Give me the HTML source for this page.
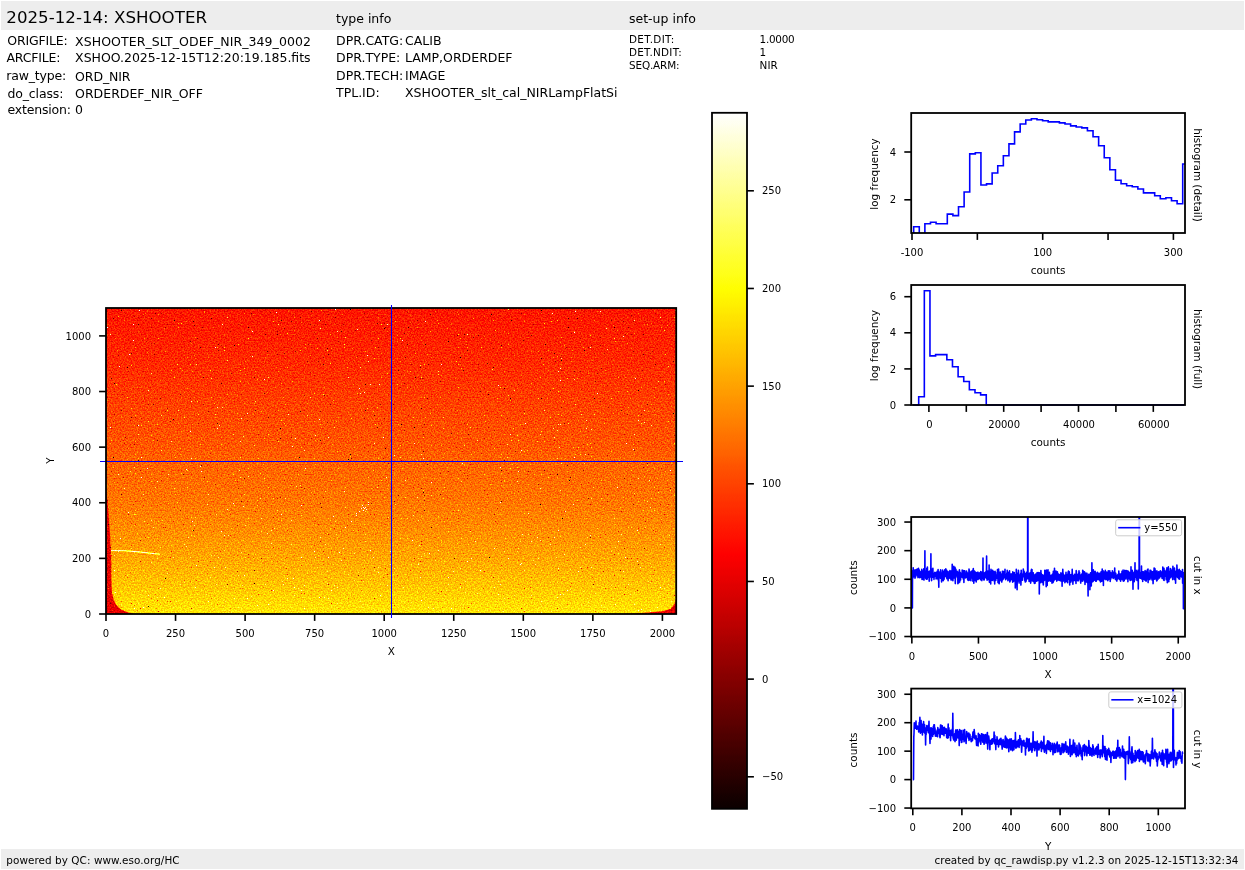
<!DOCTYPE html>
<html><head><meta charset="utf-8"><title>XSHOOTER rawdisp</title>
<style>
html,body{margin:0;padding:0;background:#fff;overflow:hidden;}
svg{display:block;will-change:transform;transform:translateZ(0);font-family:"DejaVu Sans","Liberation Sans",sans-serif;fill:#000;}
</style></head><body>
<svg width="1245" height="870" viewBox="0 0 1245 870">
<defs>
<filter id="hotn" x="0" y="0" width="1" height="1" filterUnits="objectBoundingBox" color-interpolation-filters="sRGB">
<feTurbulence type="fractalNoise" baseFrequency="0.7" numOctaves="2" seed="7" result="t"/>
<feColorMatrix in="t" type="matrix" values="1 0 0 0 0  1 0 0 0 0  1 0 0 0 0  0 0 0 0 1" result="m"/>
<feComponentTransfer in="m" result="n"><feFuncR type="table" tableValues="0.0000 0.0000 0.0000 0.0000 0.0000 0.0000 0.0000 0.0000 0.0000 0.0000 0.0000 0.0099 0.0446 0.0793 0.1141 0.1488 0.1835 0.2182 0.2530 0.2877 0.3224 0.3572 0.3919 0.4109 0.4142 0.4175 0.4208 0.4241 0.4274 0.4307 0.4340 0.4373 0.4406 0.4439 0.4472 0.4505 0.4538 0.4571 0.4604 0.4637 0.4670 0.4703 0.4736 0.4769 0.4802 0.4835 0.4868 0.4901 0.4934 0.4967 0.5000 0.5033 0.5066 0.5099 0.5132 0.5165 0.5198 0.5231 0.5264 0.5297 0.5330 0.5363 0.5396 0.5429 0.5462 0.5495 0.5528 0.5561 0.5594 0.5627 0.5660 0.5693 0.5726 0.5759 0.5792 0.5825 0.5858 0.6054 0.6412 0.6770 0.7128 0.7486 0.7843 0.8201 0.8559 0.8917 0.9275 0.9633 0.9991 1.0000 1.0000 1.0000 1.0000 1.0000 1.0000 1.0000 1.0000 1.0000 1.0000 1.0000 1.0000"/><feFuncG type="table" tableValues="0.0000 0.0000 0.0000 0.0000 0.0000 0.0000 0.0000 0.0000 0.0000 0.0000 0.0000 0.0099 0.0446 0.0793 0.1141 0.1488 0.1835 0.2182 0.2530 0.2877 0.3224 0.3572 0.3919 0.4109 0.4142 0.4175 0.4208 0.4241 0.4274 0.4307 0.4340 0.4373 0.4406 0.4439 0.4472 0.4505 0.4538 0.4571 0.4604 0.4637 0.4670 0.4703 0.4736 0.4769 0.4802 0.4835 0.4868 0.4901 0.4934 0.4967 0.5000 0.5033 0.5066 0.5099 0.5132 0.5165 0.5198 0.5231 0.5264 0.5297 0.5330 0.5363 0.5396 0.5429 0.5462 0.5495 0.5528 0.5561 0.5594 0.5627 0.5660 0.5693 0.5726 0.5759 0.5792 0.5825 0.5858 0.6054 0.6412 0.6770 0.7128 0.7486 0.7843 0.8201 0.8559 0.8917 0.9275 0.9633 0.9991 1.0000 1.0000 1.0000 1.0000 1.0000 1.0000 1.0000 1.0000 1.0000 1.0000 1.0000 1.0000"/><feFuncB type="table" tableValues="0.0000 0.0000 0.0000 0.0000 0.0000 0.0000 0.0000 0.0000 0.0000 0.0000 0.0000 0.0099 0.0446 0.0793 0.1141 0.1488 0.1835 0.2182 0.2530 0.2877 0.3224 0.3572 0.3919 0.4109 0.4142 0.4175 0.4208 0.4241 0.4274 0.4307 0.4340 0.4373 0.4406 0.4439 0.4472 0.4505 0.4538 0.4571 0.4604 0.4637 0.4670 0.4703 0.4736 0.4769 0.4802 0.4835 0.4868 0.4901 0.4934 0.4967 0.5000 0.5033 0.5066 0.5099 0.5132 0.5165 0.5198 0.5231 0.5264 0.5297 0.5330 0.5363 0.5396 0.5429 0.5462 0.5495 0.5528 0.5561 0.5594 0.5627 0.5660 0.5693 0.5726 0.5759 0.5792 0.5825 0.5858 0.6054 0.6412 0.6770 0.7128 0.7486 0.7843 0.8201 0.8559 0.8917 0.9275 0.9633 0.9991 1.0000 1.0000 1.0000 1.0000 1.0000 1.0000 1.0000 1.0000 1.0000 1.0000 1.0000 1.0000"/></feComponentTransfer>
<feComposite in="SourceGraphic" in2="n" operator="arithmetic" k1="0" k2="1" k3="1" k4="-0.5" result="v"/>
<feComponentTransfer in="v"><feFuncR type="table" tableValues="0.0416 0.0828 0.1240 0.1651 0.2063 0.2475 0.2887 0.3299 0.3710 0.4122 0.4534 0.4946 0.5358 0.5769 0.6181 0.6593 0.7108 0.7519 0.7931 0.8343 0.8755 0.9167 0.9578 0.9990 1.0000 1.0000 1.0000 1.0000 1.0000 1.0000 1.0000 1.0000 1.0000 1.0000 1.0000 1.0000 1.0000 1.0000 1.0000 1.0000 1.0000 1.0000 1.0000 1.0000 1.0000 1.0000 1.0000 1.0000 1.0000 1.0000 1.0000 1.0000 1.0000 1.0000 1.0000 1.0000 1.0000 1.0000 1.0000 1.0000 1.0000 1.0000 1.0000 1.0000"/><feFuncG type="table" tableValues="0.0000 0.0000 0.0000 0.0000 0.0000 0.0000 0.0000 0.0000 0.0000 0.0000 0.0000 0.0000 0.0000 0.0000 0.0000 0.0000 0.0000 0.0000 0.0000 0.0000 0.0000 0.0000 0.0000 0.0000 0.0402 0.0814 0.1225 0.1637 0.2049 0.2461 0.2873 0.3284 0.3799 0.4211 0.4623 0.5034 0.5446 0.5858 0.6270 0.6681 0.7093 0.7505 0.7917 0.8328 0.8740 0.9152 0.9564 0.9975 1.0000 1.0000 1.0000 1.0000 1.0000 1.0000 1.0000 1.0000 1.0000 1.0000 1.0000 1.0000 1.0000 1.0000 1.0000 1.0000"/><feFuncB type="table" tableValues="0.0000 0.0000 0.0000 0.0000 0.0000 0.0000 0.0000 0.0000 0.0000 0.0000 0.0000 0.0000 0.0000 0.0000 0.0000 0.0000 0.0000 0.0000 0.0000 0.0000 0.0000 0.0000 0.0000 0.0000 0.0000 0.0000 0.0000 0.0000 0.0000 0.0000 0.0000 0.0000 0.0000 0.0000 0.0000 0.0000 0.0000 0.0000 0.0000 0.0000 0.0000 0.0000 0.0000 0.0000 0.0000 0.0000 0.0000 0.0000 0.0735 0.1353 0.1971 0.2588 0.3206 0.3824 0.4441 0.5059 0.5676 0.6294 0.6912 0.7529 0.8147 0.8765 0.9382 1.0000"/></feComponentTransfer>
</filter>
<filter id="hot" x="0" y="0" width="1" height="1" color-interpolation-filters="sRGB">
<feComponentTransfer><feFuncR type="table" tableValues="0.0416 0.0828 0.1240 0.1651 0.2063 0.2475 0.2887 0.3299 0.3710 0.4122 0.4534 0.4946 0.5358 0.5769 0.6181 0.6593 0.7108 0.7519 0.7931 0.8343 0.8755 0.9167 0.9578 0.9990 1.0000 1.0000 1.0000 1.0000 1.0000 1.0000 1.0000 1.0000 1.0000 1.0000 1.0000 1.0000 1.0000 1.0000 1.0000 1.0000 1.0000 1.0000 1.0000 1.0000 1.0000 1.0000 1.0000 1.0000 1.0000 1.0000 1.0000 1.0000 1.0000 1.0000 1.0000 1.0000 1.0000 1.0000 1.0000 1.0000 1.0000 1.0000 1.0000 1.0000"/><feFuncG type="table" tableValues="0.0000 0.0000 0.0000 0.0000 0.0000 0.0000 0.0000 0.0000 0.0000 0.0000 0.0000 0.0000 0.0000 0.0000 0.0000 0.0000 0.0000 0.0000 0.0000 0.0000 0.0000 0.0000 0.0000 0.0000 0.0402 0.0814 0.1225 0.1637 0.2049 0.2461 0.2873 0.3284 0.3799 0.4211 0.4623 0.5034 0.5446 0.5858 0.6270 0.6681 0.7093 0.7505 0.7917 0.8328 0.8740 0.9152 0.9564 0.9975 1.0000 1.0000 1.0000 1.0000 1.0000 1.0000 1.0000 1.0000 1.0000 1.0000 1.0000 1.0000 1.0000 1.0000 1.0000 1.0000"/><feFuncB type="table" tableValues="0.0000 0.0000 0.0000 0.0000 0.0000 0.0000 0.0000 0.0000 0.0000 0.0000 0.0000 0.0000 0.0000 0.0000 0.0000 0.0000 0.0000 0.0000 0.0000 0.0000 0.0000 0.0000 0.0000 0.0000 0.0000 0.0000 0.0000 0.0000 0.0000 0.0000 0.0000 0.0000 0.0000 0.0000 0.0000 0.0000 0.0000 0.0000 0.0000 0.0000 0.0000 0.0000 0.0000 0.0000 0.0000 0.0000 0.0000 0.0000 0.0735 0.1353 0.1971 0.2588 0.3206 0.3824 0.4441 0.5059 0.5676 0.6294 0.6912 0.7529 0.8147 0.8765 0.9382 1.0000"/></feComponentTransfer>
</filter>
<linearGradient id="ig" gradientUnits="userSpaceOnUse" x1="0" y1="614.0" x2="0" y2="308.0">
<stop offset="0.0000" stop-color="rgb(183,183,183)"/>
<stop offset="0.0182" stop-color="rgb(180,180,180)"/>
<stop offset="0.0909" stop-color="rgb(169,169,169)"/>
<stop offset="0.1818" stop-color="rgb(157,157,157)"/>
<stop offset="0.2726" stop-color="rgb(147,147,147)"/>
<stop offset="0.3635" stop-color="rgb(138,138,138)"/>
<stop offset="0.5053" stop-color="rgb(130,130,130)"/>
<stop offset="0.5453" stop-color="rgb(126,126,126)"/>
<stop offset="0.6362" stop-color="rgb(121,121,121)"/>
<stop offset="0.7271" stop-color="rgb(115,115,115)"/>
<stop offset="0.8179" stop-color="rgb(109,109,109)"/>
<stop offset="0.9088" stop-color="rgb(105,105,105)"/>
<stop offset="0.9988" stop-color="rgb(101,101,101)"/>
</linearGradient>
<linearGradient id="cg" x1="0" y1="1" x2="0" y2="0"><stop offset="0" stop-color="#000"/><stop offset="1" stop-color="#fff"/></linearGradient>
<clipPath id="c1"><rect x="911.2" y="113" width="273.8" height="120"/></clipPath>
<clipPath id="c2"><rect x="911.2" y="285" width="273.8" height="120"/></clipPath>
<clipPath id="c3"><rect x="911.2" y="517" width="273.8" height="119.7"/></clipPath>
<clipPath id="c4"><rect x="911.2" y="688.6" width="273.8" height="119.8"/></clipPath>
</defs>
<rect x="1" y="1" width="1243" height="29" fill="#ededed"/>
<rect x="1" y="849" width="1243" height="20" fill="#ededed"/>
<text x="6.30" y="23.00" font-size="16.67" text-anchor="start">2025-12-14: XSHOOTER</text>
<text x="336.00" y="23.00" font-size="12.5" text-anchor="start">type info</text>
<text x="629.00" y="23.00" font-size="12.5" text-anchor="start">set-up info</text>
<text x="7.30" y="45.00" font-size="12.5" text-anchor="start" textLength="60.35">ORIGFILE:</text>
<text x="75.10" y="46.00" font-size="12.5" text-anchor="start" textLength="235.80">XSHOOTER_SLT_ODEF_NIR_349_0002</text>
<text x="6.40" y="62.00" font-size="12.5" text-anchor="start" textLength="53.99">ARCFILE:</text>
<text x="75.10" y="62.00" font-size="12.5" text-anchor="start" textLength="235.46">XSHOO.2025-12-15T12:20:19.185.fits</text>
<text x="6.30" y="80.00" font-size="12.5" text-anchor="start" textLength="59.91">raw_type:</text>
<text x="75.10" y="81.00" font-size="12.5" text-anchor="start" textLength="55.42">ORD_NIR</text>
<text x="7.50" y="98.00" font-size="12.5" text-anchor="start" textLength="55.87">do_class:</text>
<text x="75.10" y="98.00" font-size="12.5" text-anchor="start">ORDERDEF_NIR_OFF</text>
<text x="7.50" y="114.00" font-size="12.5" text-anchor="start" textLength="63.55">extension:</text>
<text x="75.10" y="114.00" font-size="12.5" text-anchor="start">0</text>
<text x="336.00" y="45.00" font-size="12.5" text-anchor="start">DPR.CATG:</text>
<text x="405.00" y="45.00" font-size="12.5" text-anchor="start">CALIB</text>
<text x="336.00" y="62.00" font-size="12.5" text-anchor="start">DPR.TYPE:</text>
<text x="405.00" y="62.00" font-size="12.5" text-anchor="start">LAMP,ORDERDEF</text>
<text x="336.00" y="80.00" font-size="12.5" text-anchor="start">DPR.TECH:</text>
<text x="405.00" y="80.00" font-size="12.5" text-anchor="start">IMAGE</text>
<text x="336.00" y="97.00" font-size="12.5" text-anchor="start">TPL.ID:</text>
<text x="405.00" y="97.00" font-size="12.5" text-anchor="start">XSHOOTER_slt_cal_NIRLampFlatSi</text>
<text x="629.00" y="43.00" font-size="10.42" text-anchor="start" textLength="45.18">DET.DIT:</text>
<text x="759.60" y="43.00" font-size="10.42" text-anchor="start" textLength="35.06">1.0000</text>
<text x="629.00" y="56.00" font-size="10.42" text-anchor="start" textLength="52.67">DET.NDIT:</text>
<text x="759.60" y="56.00" font-size="10.42" text-anchor="start">1</text>
<text x="629.00" y="69.00" font-size="10.42" text-anchor="start" textLength="50.48">SEQ.ARM:</text>
<text x="759.60" y="69.00" font-size="10.42" text-anchor="start">NIR</text>
<text x="6.30" y="864.00" font-size="10.42" text-anchor="start" textLength="173.29">powered by QC: www.eso.org/HC</text>
<text x="1238.40" y="864.00" font-size="10.42" text-anchor="end" textLength="303.80">created by qc_rawdisp.py v1.2.3 on 2025-12-15T13:32:34</text>
<g filter="url(#hotn)">
<rect x="106.0" y="308.0" width="570.2" height="306.0" fill="url(#ig)"/>
<path d="M106 490 L107.5 500 L109 520 L110.3 540 L111 555 L111.5 585 L112 593 L113.7 600 L116 604.5 L118 607 L122 610 L127 612 L131 613.2 L135 614 L106 614 Z" fill="rgb(85,85,85)"/>
<path d="M676.2 599 L675 603 L672.2 607.2 L668.7 609.5 L663 611.3 L651.5 612.3 L640 612.9 L625 613.6 L676.2 614 Z" fill="rgb(85,85,85)"/>
<path d="M111 550.4 L125 550.8 L140 552 L160 554.3" stroke="#fff" stroke-width="1" fill="none"/>
<rect x="564" y="554" width="1" height="1" fill="rgb(214,214,214)"/>
<rect x="138" y="425" width="1" height="1" fill="rgb(255,255,255)"/>
<rect x="133" y="324" width="1" height="1" fill="rgb(232,232,232)"/>
<rect x="240" y="441" width="1" height="1" fill="rgb(244,244,244)"/>
<rect x="586" y="428" width="1" height="1" fill="rgb(233,233,233)"/>
<rect x="141" y="477" width="1" height="1" fill="rgb(255,255,255)"/>
<rect x="606" y="328" width="1" height="1" fill="rgb(243,243,243)"/>
<rect x="236" y="580" width="1" height="1" fill="rgb(200,200,200)"/>
<rect x="508" y="309" width="1" height="1" fill="rgb(221,221,221)"/>
<rect x="222" y="407" width="1" height="1" fill="rgb(215,215,215)"/>
<rect x="192" y="521" width="1" height="1" fill="rgb(255,255,255)"/>
<rect x="560" y="380" width="1" height="1" fill="rgb(255,255,255)"/>
<rect x="561" y="463" width="1" height="1" fill="rgb(211,211,211)"/>
<rect x="115" y="592" width="1" height="1" fill="rgb(255,255,255)"/>
<rect x="586" y="420" width="1" height="1" fill="rgb(219,219,219)"/>
<rect x="638" y="478" width="1" height="1" fill="rgb(255,255,255)"/>
<rect x="528" y="513" width="1" height="1" fill="rgb(223,223,223)"/>
<rect x="233" y="503" width="1" height="1" fill="rgb(255,255,255)"/>
<rect x="500" y="502" width="1" height="1" fill="rgb(255,255,255)"/>
<rect x="560" y="368" width="1" height="1" fill="rgb(255,255,255)"/>
<rect x="560" y="424" width="1" height="1" fill="rgb(230,230,230)"/>
<rect x="641" y="609" width="1" height="1" fill="rgb(240,240,240)"/>
<rect x="194" y="525" width="1" height="1" fill="rgb(220,220,220)"/>
<rect x="421" y="454" width="1" height="1" fill="rgb(215,215,215)"/>
<rect x="335" y="309" width="1" height="1" fill="rgb(255,255,255)"/>
<rect x="465" y="592" width="1" height="1" fill="rgb(216,216,216)"/>
<rect x="668" y="366" width="1" height="1" fill="rgb(207,207,207)"/>
<rect x="337" y="331" width="1" height="1" fill="rgb(241,241,241)"/>
<rect x="186" y="469" width="1" height="1" fill="rgb(255,255,255)"/>
<rect x="386" y="477" width="1" height="1" fill="rgb(255,255,255)"/>
<rect x="597" y="393" width="1" height="1" fill="rgb(255,255,255)"/>
<rect x="139" y="310" width="1" height="1" fill="rgb(255,255,255)"/>
<rect x="301" y="590" width="1" height="1" fill="rgb(224,224,224)"/>
<rect x="365" y="511" width="1" height="1" fill="rgb(216,216,216)"/>
<rect x="557" y="430" width="1" height="1" fill="rgb(236,236,236)"/>
<rect x="391" y="518" width="1" height="1" fill="rgb(200,200,200)"/>
<rect x="129" y="354" width="1" height="1" fill="rgb(255,255,255)"/>
<rect x="222" y="324" width="1" height="1" fill="rgb(255,255,255)"/>
<rect x="448" y="577" width="1" height="1" fill="rgb(255,255,255)"/>
<rect x="315" y="435" width="1" height="1" fill="rgb(239,239,239)"/>
<rect x="641" y="423" width="1" height="1" fill="rgb(217,217,217)"/>
<rect x="574" y="379" width="1" height="1" fill="rgb(225,225,225)"/>
<rect x="518" y="471" width="1" height="1" fill="rgb(255,255,255)"/>
<rect x="387" y="324" width="1" height="1" fill="rgb(255,255,255)"/>
<rect x="408" y="454" width="1" height="1" fill="rgb(201,201,201)"/>
<rect x="423" y="458" width="1" height="1" fill="rgb(236,236,236)"/>
<rect x="405" y="480" width="1" height="1" fill="rgb(230,230,230)"/>
<rect x="248" y="476" width="1" height="1" fill="rgb(209,209,209)"/>
<rect x="669" y="535" width="1" height="1" fill="rgb(214,214,214)"/>
<rect x="359" y="388" width="1" height="1" fill="rgb(255,255,255)"/>
<rect x="116" y="384" width="1" height="1" fill="rgb(208,208,208)"/>
<rect x="498" y="385" width="1" height="1" fill="rgb(255,255,255)"/>
<rect x="216" y="514" width="1" height="1" fill="rgb(227,227,227)"/>
<rect x="364" y="392" width="1" height="1" fill="rgb(246,246,246)"/>
<rect x="221" y="531" width="1" height="1" fill="rgb(255,255,255)"/>
<rect x="217" y="407" width="1" height="1" fill="rgb(255,255,255)"/>
<rect x="638" y="420" width="1" height="1" fill="rgb(255,255,255)"/>
<rect x="107" y="327" width="1" height="1" fill="rgb(255,255,255)"/>
<rect x="344" y="491" width="1" height="1" fill="rgb(244,244,244)"/>
<rect x="244" y="494" width="1" height="1" fill="rgb(205,205,205)"/>
<rect x="591" y="429" width="1" height="1" fill="rgb(216,216,216)"/>
<rect x="462" y="463" width="1" height="1" fill="rgb(255,255,255)"/>
<rect x="538" y="558" width="1" height="1" fill="rgb(219,219,219)"/>
<rect x="644" y="422" width="1" height="1" fill="rgb(220,220,220)"/>
<rect x="319" y="419" width="1" height="1" fill="rgb(255,255,255)"/>
<rect x="264" y="379" width="1" height="1" fill="rgb(255,255,255)"/>
<rect x="414" y="443" width="1" height="1" fill="rgb(255,255,255)"/>
<rect x="195" y="587" width="1" height="1" fill="rgb(255,255,255)"/>
<rect x="319" y="597" width="1" height="1" fill="rgb(255,255,255)"/>
<rect x="339" y="552" width="1" height="1" fill="rgb(255,255,255)"/>
<rect x="145" y="591" width="1" height="1" fill="rgb(213,213,213)"/>
<rect x="379" y="384" width="1" height="1" fill="rgb(247,247,247)"/>
<rect x="147" y="468" width="1" height="1" fill="rgb(255,255,255)"/>
<rect x="336" y="534" width="1" height="1" fill="rgb(209,209,209)"/>
<rect x="295" y="438" width="1" height="1" fill="rgb(255,255,255)"/>
<rect x="494" y="548" width="1" height="1" fill="rgb(255,255,255)"/>
<rect x="357" y="329" width="1" height="1" fill="rgb(255,255,255)"/>
<rect x="644" y="461" width="1" height="1" fill="rgb(230,230,230)"/>
<rect x="429" y="553" width="1" height="1" fill="rgb(255,255,255)"/>
<rect x="287" y="578" width="1" height="1" fill="rgb(247,247,247)"/>
<rect x="186" y="546" width="1" height="1" fill="rgb(223,223,223)"/>
<rect x="607" y="349" width="1" height="1" fill="rgb(212,212,212)"/>
<rect x="301" y="557" width="1" height="1" fill="rgb(255,255,255)"/>
<rect x="552" y="313" width="1" height="1" fill="rgb(247,247,247)"/>
<rect x="492" y="369" width="1" height="1" fill="rgb(209,209,209)"/>
<rect x="319" y="320" width="1" height="1" fill="rgb(255,255,255)"/>
<rect x="196" y="364" width="1" height="1" fill="rgb(212,212,212)"/>
<rect x="575" y="311" width="1" height="1" fill="rgb(255,255,255)"/>
<rect x="142" y="591" width="1" height="1" fill="rgb(200,200,200)"/>
<rect x="635" y="378" width="1" height="1" fill="rgb(255,255,255)"/>
<rect x="438" y="371" width="1" height="1" fill="rgb(218,218,218)"/>
<rect x="431" y="482" width="1" height="1" fill="rgb(255,255,255)"/>
<rect x="524" y="610" width="1" height="1" fill="rgb(204,204,204)"/>
<rect x="565" y="511" width="1" height="1" fill="rgb(232,232,232)"/>
<rect x="255" y="401" width="1" height="1" fill="rgb(203,203,203)"/>
<rect x="441" y="364" width="1" height="1" fill="rgb(255,255,255)"/>
<rect x="617" y="487" width="1" height="1" fill="rgb(255,255,255)"/>
<rect x="503" y="611" width="1" height="1" fill="rgb(239,239,239)"/>
<rect x="296" y="486" width="1" height="1" fill="rgb(204,204,204)"/>
<rect x="500" y="467" width="1" height="1" fill="rgb(236,236,236)"/>
<rect x="151" y="373" width="1" height="1" fill="rgb(214,214,214)"/>
<rect x="252" y="331" width="1" height="1" fill="rgb(255,255,255)"/>
<rect x="425" y="321" width="1" height="1" fill="rgb(255,255,255)"/>
<rect x="252" y="356" width="1" height="1" fill="rgb(248,248,248)"/>
<rect x="626" y="443" width="1" height="1" fill="rgb(255,255,255)"/>
<rect x="305" y="468" width="1" height="1" fill="rgb(255,255,255)"/>
<rect x="522" y="534" width="1" height="1" fill="rgb(223,223,223)"/>
<rect x="242" y="585" width="1" height="1" fill="rgb(206,206,206)"/>
<rect x="227" y="509" width="1" height="1" fill="rgb(248,248,248)"/>
<rect x="119" y="366" width="1" height="1" fill="rgb(255,255,255)"/>
<rect x="419" y="545" width="1" height="1" fill="rgb(225,225,225)"/>
<rect x="243" y="506" width="1" height="1" fill="rgb(247,247,247)"/>
<rect x="215" y="347" width="1" height="1" fill="rgb(255,255,255)"/>
<rect x="292" y="446" width="1" height="1" fill="rgb(255,255,255)"/>
<rect x="508" y="558" width="1" height="1" fill="rgb(255,255,255)"/>
<rect x="623" y="336" width="1" height="1" fill="rgb(255,255,255)"/>
<rect x="383" y="437" width="1" height="1" fill="rgb(255,255,255)"/>
<rect x="521" y="563" width="1" height="1" fill="rgb(255,255,255)"/>
<rect x="200" y="466" width="1" height="1" fill="rgb(255,255,255)"/>
<rect x="640" y="567" width="1" height="1" fill="rgb(220,220,220)"/>
<rect x="553" y="428" width="1" height="1" fill="rgb(205,205,205)"/>
<rect x="128" y="512" width="1" height="1" fill="rgb(255,255,255)"/>
<rect x="649" y="480" width="1" height="1" fill="rgb(244,244,244)"/>
<rect x="276" y="312" width="1" height="1" fill="rgb(255,255,255)"/>
<rect x="367" y="355" width="1" height="1" fill="rgb(255,255,255)"/>
<rect x="525" y="423" width="1" height="1" fill="rgb(255,255,255)"/>
<rect x="239" y="470" width="1" height="1" fill="rgb(208,208,208)"/>
<rect x="585" y="544" width="1" height="1" fill="rgb(227,227,227)"/>
<rect x="402" y="340" width="1" height="1" fill="rgb(249,249,249)"/>
<rect x="521" y="450" width="1" height="1" fill="rgb(255,255,255)"/>
<rect x="600" y="311" width="1" height="1" fill="rgb(255,255,255)"/>
<rect x="650" y="507" width="1" height="1" fill="rgb(226,226,226)"/>
<rect x="130" y="471" width="1" height="1" fill="rgb(204,204,204)"/>
<rect x="380" y="595" width="1" height="1" fill="rgb(255,255,255)"/>
<rect x="133" y="340" width="1" height="1" fill="rgb(244,244,244)"/>
<rect x="196" y="565" width="1" height="1" fill="rgb(255,255,255)"/>
<rect x="412" y="540" width="1" height="1" fill="rgb(255,255,255)"/>
<rect x="378" y="572" width="1" height="1" fill="rgb(255,255,255)"/>
<rect x="559" y="447" width="1" height="1" fill="rgb(220,220,220)"/>
<rect x="574" y="332" width="1" height="1" fill="rgb(255,255,255)"/>
<rect x="190" y="431" width="1" height="1" fill="rgb(255,255,255)"/>
<rect x="243" y="436" width="1" height="1" fill="rgb(228,228,228)"/>
<rect x="245" y="525" width="1" height="1" fill="rgb(221,221,221)"/>
<rect x="368" y="361" width="1" height="1" fill="rgb(217,217,217)"/>
<rect x="273" y="590" width="1" height="1" fill="rgb(255,255,255)"/>
<rect x="219" y="425" width="1" height="1" fill="rgb(230,230,230)"/>
<rect x="333" y="516" width="1" height="1" fill="rgb(255,255,255)"/>
<rect x="633" y="449" width="1" height="1" fill="rgb(255,255,255)"/>
<rect x="360" y="393" width="1" height="1" fill="rgb(222,222,222)"/>
<rect x="161" y="415" width="1" height="1" fill="rgb(217,217,217)"/>
<rect x="165" y="578" width="1" height="1" fill="#000"/>
<rect x="193" y="530" width="1" height="1" fill="#000"/>
<rect x="348" y="459" width="1" height="1" fill="#000"/>
<rect x="491" y="314" width="1" height="1" fill="#000"/>
<rect x="385" y="448" width="1" height="1" fill="#000"/>
<rect x="350" y="309" width="1" height="1" fill="#000"/>
<rect x="113" y="457" width="1" height="1" fill="#000"/>
<rect x="365" y="410" width="1" height="1" fill="#000"/>
<rect x="173" y="419" width="1" height="1" fill="#000"/>
<rect x="489" y="557" width="1" height="1" fill="#000"/>
<rect x="541" y="310" width="1" height="1" fill="#000"/>
<rect x="299" y="457" width="1" height="1" fill="#000"/>
<rect x="569" y="480" width="1" height="1" fill="#000"/>
<rect x="562" y="518" width="1" height="1" fill="#000"/>
<rect x="148" y="606" width="1" height="1" fill="#000"/>
<rect x="423" y="492" width="1" height="1" fill="#000"/>
<rect x="254" y="583" width="1" height="1" fill="#000"/>
<rect x="673" y="413" width="1" height="1" fill="#000"/>
<rect x="384" y="328" width="1" height="1" fill="#000"/>
<rect x="540" y="504" width="1" height="1" fill="#000"/>
<rect x="362" y="505" width="1" height="1" fill="#fff"/>
<rect x="363" y="510" width="1" height="1" fill="#fff"/>
<rect x="356" y="513" width="1" height="1" fill="#fff"/>
<rect x="345" y="527" width="1" height="1" fill="#fff"/>
<rect x="368" y="504" width="1" height="1" fill="#fff"/>
<rect x="363" y="507" width="1" height="1" fill="#fff"/>
<rect x="365" y="507" width="1" height="1" fill="#fff"/>
<rect x="364" y="508" width="1" height="1" fill="#fff"/>
<rect x="366" y="509" width="1" height="1" fill="#fff"/>
<rect x="356" y="515" width="1" height="1" fill="#fff"/>
<rect x="361" y="508" width="1" height="1" fill="#fff"/>
<rect x="351" y="521" width="1" height="1" fill="#fff"/>
<rect x="359" y="511" width="1" height="1" fill="#fff"/>
<rect x="368" y="502" width="1" height="1" fill="#fff"/>
</g>
<line x1="100.00" y1="461.45" x2="683.00" y2="461.45" stroke="#0000ff" stroke-width="1.05"/>
<rect x="106.0" y="308.0" width="570.2" height="306.0" fill="none" stroke="#000" stroke-width="1.8"/>
<line x1="391.50" y1="304.90" x2="391.50" y2="617.90" stroke="#0000ff" stroke-width="1.05"/>
<line x1="106.00" y1="614.00" x2="106.00" y2="620.90" stroke="#000" stroke-width="1.6"/>
<text x="106.00" y="636.60" font-size="10.0" text-anchor="middle">0</text>
<line x1="175.55" y1="614.00" x2="175.55" y2="620.90" stroke="#000" stroke-width="1.6"/>
<text x="175.55" y="636.60" font-size="10.0" text-anchor="middle">250</text>
<line x1="245.10" y1="614.00" x2="245.10" y2="620.90" stroke="#000" stroke-width="1.6"/>
<text x="245.10" y="636.60" font-size="10.0" text-anchor="middle">500</text>
<line x1="314.65" y1="614.00" x2="314.65" y2="620.90" stroke="#000" stroke-width="1.6"/>
<text x="314.65" y="636.60" font-size="10.0" text-anchor="middle">750</text>
<line x1="384.20" y1="614.00" x2="384.20" y2="620.90" stroke="#000" stroke-width="1.6"/>
<text x="384.20" y="636.60" font-size="10.0" text-anchor="middle">1000</text>
<line x1="453.75" y1="614.00" x2="453.75" y2="620.90" stroke="#000" stroke-width="1.6"/>
<text x="453.75" y="636.60" font-size="10.0" text-anchor="middle">1250</text>
<line x1="523.30" y1="614.00" x2="523.30" y2="620.90" stroke="#000" stroke-width="1.6"/>
<text x="523.30" y="636.60" font-size="10.0" text-anchor="middle">1500</text>
<line x1="592.85" y1="614.00" x2="592.85" y2="620.90" stroke="#000" stroke-width="1.6"/>
<text x="592.85" y="636.60" font-size="10.0" text-anchor="middle">1750</text>
<line x1="662.40" y1="614.00" x2="662.40" y2="620.90" stroke="#000" stroke-width="1.6"/>
<text x="662.40" y="636.60" font-size="10.0" text-anchor="middle">2000</text>
<line x1="106.00" y1="614.00" x2="99.10" y2="614.00" stroke="#000" stroke-width="1.6"/>
<text x="91.00" y="617.60" font-size="10.0" text-anchor="end">0</text>
<line x1="106.00" y1="558.38" x2="99.10" y2="558.38" stroke="#000" stroke-width="1.6"/>
<text x="91.00" y="561.98" font-size="10.0" text-anchor="end">200</text>
<line x1="106.00" y1="502.76" x2="99.10" y2="502.76" stroke="#000" stroke-width="1.6"/>
<text x="91.00" y="506.36" font-size="10.0" text-anchor="end">400</text>
<line x1="106.00" y1="447.14" x2="99.10" y2="447.14" stroke="#000" stroke-width="1.6"/>
<text x="91.00" y="450.74" font-size="10.0" text-anchor="end">600</text>
<line x1="106.00" y1="391.52" x2="99.10" y2="391.52" stroke="#000" stroke-width="1.6"/>
<text x="91.00" y="395.12" font-size="10.0" text-anchor="end">800</text>
<line x1="106.00" y1="335.90" x2="99.10" y2="335.90" stroke="#000" stroke-width="1.6"/>
<text x="91.00" y="339.50" font-size="10.0" text-anchor="end">1000</text>
<text x="391.30" y="655.00" font-size="10.42" text-anchor="middle">X</text>
<text transform="translate(53.50,460.70) rotate(-90)" font-size="10.42" text-anchor="middle">Y</text>
<rect x="712.0" y="112.8" width="35.0" height="696.0" fill="url(#cg)" filter="url(#hot)"/>
<rect x="712.0" y="112.8" width="35.0" height="696.0" fill="none" stroke="#000" stroke-width="1.8"/>
<line x1="747.00" y1="776.79" x2="753.90" y2="776.79" stroke="#000" stroke-width="1.6"/>
<text x="762.00" y="780.39" font-size="10.0" text-anchor="start">−50</text>
<line x1="747.00" y1="679.12" x2="753.90" y2="679.12" stroke="#000" stroke-width="1.6"/>
<text x="762.00" y="682.73" font-size="10.0" text-anchor="start">0</text>
<line x1="747.00" y1="581.46" x2="753.90" y2="581.46" stroke="#000" stroke-width="1.6"/>
<text x="762.00" y="585.06" font-size="10.0" text-anchor="start">50</text>
<line x1="747.00" y1="483.80" x2="753.90" y2="483.80" stroke="#000" stroke-width="1.6"/>
<text x="762.00" y="487.40" font-size="10.0" text-anchor="start">100</text>
<line x1="747.00" y1="386.13" x2="753.90" y2="386.13" stroke="#000" stroke-width="1.6"/>
<text x="762.00" y="389.73" font-size="10.0" text-anchor="start">150</text>
<line x1="747.00" y1="288.47" x2="753.90" y2="288.47" stroke="#000" stroke-width="1.6"/>
<text x="762.00" y="292.07" font-size="10.0" text-anchor="start">200</text>
<line x1="747.00" y1="190.80" x2="753.90" y2="190.80" stroke="#000" stroke-width="1.6"/>
<text x="762.00" y="194.40" font-size="10.0" text-anchor="start">250</text>
<path d="M913.67 240 V226.8 H919.27 V240.0 H924.88 V223.8 H930.49 V222.3 H936.09 V223.8 H941.69 V223.8 H947.30 V214.1 H952.90 V215.6 H958.51 V206.7 H964.12 V192.0 H969.72 V153.9 H975.32 V152.8 H980.93 V185.0 H986.53 V183.9 H992.14 V173.0 H997.75 V165.8 H1003.35 V155.8 H1008.95 V143.9 H1014.56 V131.9 H1020.16 V124.0 H1025.77 V120.0 H1031.38 V118.8 H1036.98 V119.7 H1042.59 V120.7 H1048.19 V121.9 H1053.80 V121.9 H1059.40 V122.9 H1065.00 V124.0 H1070.61 V125.9 H1076.21 V127.0 H1081.82 V127.9 H1087.42 V130.7 H1093.03 V136.7 H1098.63 V145.8 H1104.24 V157.8 H1109.85 V169.7 H1115.45 V180.2 H1121.06 V183.8 H1126.66 V185.7 H1132.26 V186.8 H1137.87 V189.0 H1143.47 V192.9 H1149.08 V192.9 H1154.68 V195.7 H1160.29 V198.7 H1165.89 V197.7 H1171.50 V200.7 H1177.11 V203.7 H1182.71 V164 H1186" fill="none" stroke="#0000ff" stroke-width="1.6" stroke-linejoin="miter" clip-path="url(#c1)"/>
<rect x="911.2" y="113" width="273.79999999999995" height="120" fill="none" stroke="#000" stroke-width="1.8"/>
<line x1="912.00" y1="233.00" x2="912.00" y2="239.90" stroke="#000" stroke-width="1.6"/>
<text x="912.00" y="255.70" font-size="10.0" text-anchor="middle">-100</text>
<line x1="977.35" y1="233.00" x2="977.35" y2="239.90" stroke="#000" stroke-width="1.6"/>
<line x1="1042.70" y1="233.00" x2="1042.70" y2="239.90" stroke="#000" stroke-width="1.6"/>
<text x="1042.70" y="255.70" font-size="10.0" text-anchor="middle">100</text>
<line x1="1108.05" y1="233.00" x2="1108.05" y2="239.90" stroke="#000" stroke-width="1.6"/>
<line x1="1173.40" y1="233.00" x2="1173.40" y2="239.90" stroke="#000" stroke-width="1.6"/>
<text x="1173.40" y="255.70" font-size="10.0" text-anchor="middle">300</text>
<line x1="911.20" y1="199.80" x2="904.30" y2="199.80" stroke="#000" stroke-width="1.6"/>
<text x="896.00" y="203.40" font-size="10.0" text-anchor="end">2</text>
<line x1="911.20" y1="152.00" x2="904.30" y2="152.00" stroke="#000" stroke-width="1.6"/>
<text x="896.00" y="155.60" font-size="10.0" text-anchor="end">4</text>
<text x="1048.10" y="273.70" font-size="10.42" text-anchor="middle">counts</text>
<text transform="translate(878.20,174.00) rotate(-90)" font-size="10.42" text-anchor="middle">log frequency</text>
<text transform="translate(1194.30,175.00) rotate(90)" font-size="10.42" text-anchor="middle">histogram (detail)</text>
<path d="M913 405 H918.70 V396.8 H924.33 V290.8 H929.96 V355.9 H935.59 V354.6 H941.22 V354.6 H946.85 V359.8 H952.48 V366.7 H958.11 V376.7 H963.74 V381.5 H969.37 V389.7 H975.00 V392.8 H980.63 V394.9 H986.26 V405 H1184" fill="none" stroke="#0000ff" stroke-width="1.6" stroke-linejoin="miter"/>
<rect x="911.2" y="285" width="273.79999999999995" height="120" fill="none" stroke="#000" stroke-width="1.8"/>
<line x1="928.90" y1="405.00" x2="928.90" y2="411.90" stroke="#000" stroke-width="1.6"/>
<text x="929.40" y="428.20" font-size="10.0" text-anchor="middle">0</text>
<line x1="966.30" y1="405.00" x2="966.30" y2="411.90" stroke="#000" stroke-width="1.6"/>
<line x1="1003.70" y1="405.00" x2="1003.70" y2="411.90" stroke="#000" stroke-width="1.6"/>
<text x="1004.20" y="428.20" font-size="10.0" text-anchor="middle">20000</text>
<line x1="1041.10" y1="405.00" x2="1041.10" y2="411.90" stroke="#000" stroke-width="1.6"/>
<line x1="1078.50" y1="405.00" x2="1078.50" y2="411.90" stroke="#000" stroke-width="1.6"/>
<text x="1079.00" y="428.20" font-size="10.0" text-anchor="middle">40000</text>
<line x1="1115.90" y1="405.00" x2="1115.90" y2="411.90" stroke="#000" stroke-width="1.6"/>
<line x1="1153.30" y1="405.00" x2="1153.30" y2="411.90" stroke="#000" stroke-width="1.6"/>
<text x="1153.80" y="428.20" font-size="10.0" text-anchor="middle">60000</text>
<line x1="911.20" y1="405.00" x2="904.30" y2="405.00" stroke="#000" stroke-width="1.6"/>
<text x="896.00" y="408.60" font-size="10.0" text-anchor="end">0</text>
<line x1="911.20" y1="368.90" x2="904.30" y2="368.90" stroke="#000" stroke-width="1.6"/>
<text x="896.00" y="372.50" font-size="10.0" text-anchor="end">2</text>
<line x1="911.20" y1="332.80" x2="904.30" y2="332.80" stroke="#000" stroke-width="1.6"/>
<text x="896.00" y="336.40" font-size="10.0" text-anchor="end">4</text>
<line x1="911.20" y1="296.70" x2="904.30" y2="296.70" stroke="#000" stroke-width="1.6"/>
<text x="896.00" y="300.30" font-size="10.0" text-anchor="end">6</text>
<text x="1048.10" y="446.00" font-size="10.42" text-anchor="middle">counts</text>
<text transform="translate(878.20,345.50) rotate(-90)" font-size="10.42" text-anchor="middle">log frequency</text>
<text transform="translate(1194.30,349.00) rotate(90)" font-size="10.42" text-anchor="middle">histogram (full)</text>
<polyline points="911.9,607.9 912.0,607.9 912.1,607.9 912.2,607.9 912.4,607.9 912.5,574.0 912.6,570.7 912.8,572.6 912.9,570.2 913.0,578.0 913.2,567.7 913.3,572.7 913.4,570.4 913.6,572.8 913.7,573.6 913.8,571.0 914.0,569.9 914.1,573.0 914.2,572.9 914.4,570.4 914.5,575.0 914.6,577.0 914.8,571.2 914.9,574.4 915.0,578.2 915.2,574.9 915.3,573.8 915.4,576.0 915.6,576.9 915.7,572.3 915.8,569.7 916.0,573.1 916.1,574.7 916.2,571.3 916.4,570.3 916.5,573.3 916.6,570.8 916.8,569.3 916.9,573.0 917.0,574.9 917.2,571.4 917.3,571.7 917.4,569.1 917.6,576.3 917.7,574.4 917.8,574.9 918.0,577.6 918.1,572.0 918.2,570.8 918.4,574.6 918.5,568.3 918.6,570.0 918.8,570.5 918.9,571.2 919.0,569.6 919.2,576.4 919.3,570.6 919.4,570.6 919.6,577.7 919.7,571.4 919.8,575.5 920.0,572.4 920.1,576.0 920.2,574.8 920.4,573.7 920.5,577.4 920.6,572.9 920.8,575.0 920.9,573.2 921.0,576.3 921.2,571.5 921.3,572.9 921.4,575.3 921.6,572.8 921.7,570.9 921.8,569.3 922.0,579.5 922.1,572.1 922.2,573.3 922.4,575.0 922.5,577.8 922.6,571.0 922.8,578.5 922.9,573.0 923.0,570.8 923.2,579.5 923.3,575.6 923.4,578.7 923.6,574.0 923.7,570.2 923.8,568.7 924.0,580.1 924.1,576.5 924.2,572.6 924.4,570.0 924.5,573.5 924.6,577.0 924.8,573.9 924.9,550.7 925.0,575.4 925.2,577.0 925.3,573.6 925.4,573.8 925.6,575.0 925.7,575.4 925.8,578.6 926.0,576.2 926.1,576.1 926.2,575.3 926.4,579.1 926.5,570.8 926.6,573.2 926.8,568.4 926.9,574.6 927.0,576.2 927.2,579.1 927.3,570.8 927.4,567.1 927.6,577.2 927.7,576.7 927.8,573.0 928.0,577.3 928.1,575.6 928.2,575.8 928.4,574.2 928.5,571.5 928.6,574.7 928.8,572.0 928.9,576.0 929.0,573.8 929.2,581.2 929.3,579.1 929.4,572.4 929.6,576.6 929.7,573.1 929.8,573.2 930.0,570.8 930.1,572.4 930.2,571.7 930.4,575.1 930.5,576.9 930.6,577.0 930.8,576.3 930.9,553.8 931.0,576.5 931.2,575.1 931.3,574.1 931.4,575.8 931.6,580.6 931.7,575.0 931.8,574.1 932.0,571.6 932.1,573.1 932.2,576.8 932.4,577.0 932.5,568.8 932.6,572.6 932.8,569.3 932.9,568.4 933.0,577.3 933.2,573.7 933.3,573.5 933.4,573.2 933.6,573.2 933.7,574.2 933.8,574.3 934.0,579.4 934.1,575.3 934.2,577.1 934.4,574.5 934.5,576.3 934.6,573.0 934.8,572.4 934.9,573.9 935.0,573.9 935.2,574.6 935.3,576.2 935.4,575.4 935.6,576.4 935.7,573.7 935.8,574.8 936.0,573.1 936.1,578.9 936.2,572.2 936.4,577.2 936.5,577.1 936.6,575.5 936.8,576.6 936.9,574.0 937.0,576.6 937.2,578.1 937.3,577.4 937.4,571.0 937.6,574.8 937.7,578.4 937.8,574.9 938.0,579.6 938.1,569.5 938.2,579.5 938.4,573.5 938.5,573.3 938.6,579.3 938.8,587.3 938.9,571.9 939.0,573.5 939.2,574.1 939.3,572.1 939.4,574.4 939.6,573.9 939.7,575.3 939.8,573.0 940.0,577.8 940.1,572.6 940.2,576.5 940.4,578.2 940.5,573.8 940.6,569.9 940.8,572.1 940.9,576.5 941.0,572.9 941.2,576.3 941.3,575.3 941.4,574.7 941.6,581.9 941.7,574.4 941.8,578.1 942.0,577.1 942.1,579.4 942.2,579.5 942.4,577.8 942.5,572.5 942.6,570.0 942.8,575.1 942.9,571.7 943.0,575.8 943.2,580.7 943.3,571.2 943.4,573.7 943.6,576.3 943.7,574.1 943.8,573.3 944.0,577.6 944.1,579.4 944.2,575.7 944.4,575.6 944.5,576.1 944.6,572.0 944.8,569.8 944.9,576.3 945.0,572.9 945.1,572.2 945.3,572.9 945.4,571.9 945.5,576.2 945.7,572.8 945.8,568.9 945.9,572.6 946.1,576.9 946.2,573.2 946.3,571.3 946.5,573.9 946.6,576.7 946.7,570.4 946.9,578.8 947.0,573.5 947.1,575.1 947.3,578.6 947.4,571.4 947.5,574.0 947.7,578.6 947.8,573.3 947.9,576.4 948.1,580.8 948.2,577.1 948.3,574.3 948.5,573.2 948.6,574.6 948.7,575.0 948.9,573.7 949.0,575.7 949.1,571.6 949.3,574.7 949.4,574.2 949.5,573.5 949.7,578.3 949.8,577.2 949.9,570.5 950.1,574.1 950.2,576.0 950.3,574.1 950.5,576.6 950.6,574.3 950.7,577.1 950.9,574.3 951.0,579.9 951.1,571.1 951.3,576.7 951.4,579.9 951.5,575.8 951.7,576.3 951.8,574.7 951.9,578.6 952.1,574.0 952.2,564.3 952.3,579.0 952.5,574.2 952.6,576.1 952.7,574.6 952.9,580.6 953.0,578.6 953.1,573.8 953.3,575.3 953.4,570.3 953.5,577.3 953.7,574.7 953.8,566.4 953.9,577.5 954.1,577.9 954.2,575.3 954.3,575.3 954.5,572.7 954.6,574.8 954.7,577.5 954.9,574.6 955.0,567.3 955.1,571.4 955.3,583.6 955.4,575.7 955.5,577.9 955.7,573.4 955.8,575.8 955.9,569.4 956.1,572.4 956.2,572.6 956.3,574.7 956.5,575.4 956.6,574.2 956.7,571.4 956.9,573.7 957.0,576.3 957.1,571.4 957.3,574.7 957.4,575.5 957.5,577.7 957.7,577.0 957.8,577.2 957.9,583.7 958.1,572.2 958.2,573.6 958.3,575.9 958.5,572.2 958.6,574.0 958.7,574.2 958.9,582.7 959.0,576.0 959.1,573.7 959.3,570.5 959.4,569.8 959.5,571.0 959.7,578.8 959.8,581.9 959.9,573.6 960.1,575.3 960.2,572.4 960.3,575.7 960.5,574.7 960.6,579.9 960.7,574.0 960.9,576.7 961.0,574.3 961.1,575.0 961.3,575.7 961.4,574.4 961.5,575.4 961.7,573.1 961.8,573.9 961.9,577.0 962.1,577.2 962.2,570.1 962.3,575.7 962.5,572.4 962.6,574.2 962.7,577.1 962.9,577.7 963.0,575.0 963.1,574.6 963.3,573.6 963.4,579.2 963.5,577.2 963.7,575.7 963.8,570.6 963.9,582.5 964.1,574.1 964.2,577.1 964.3,574.1 964.5,576.9 964.6,574.4 964.7,570.7 964.9,574.4 965.0,574.2 965.1,574.3 965.3,577.7 965.4,573.8 965.5,576.1 965.7,577.9 965.8,575.6 965.9,576.2 966.1,573.2 966.2,575.6 966.3,577.1 966.5,571.1 966.6,572.5 966.7,571.7 966.9,573.7 967.0,575.8 967.1,576.8 967.3,576.4 967.4,572.7 967.5,575.2 967.7,580.0 967.8,575.6 967.9,579.8 968.1,575.0 968.2,579.2 968.3,579.3 968.5,575.2 968.6,575.8 968.7,580.5 968.9,573.3 969.0,569.1 969.1,580.0 969.3,570.1 969.4,577.6 969.5,577.1 969.7,576.1 969.8,579.9 969.9,571.7 970.1,574.1 970.2,577.8 970.3,576.4 970.5,580.2 970.6,576.6 970.7,572.8 970.9,580.8 971.0,576.9 971.1,575.2 971.3,572.5 971.4,571.6 971.5,577.0 971.7,577.9 971.8,574.3 971.9,576.7 972.1,576.6 972.2,572.4 972.3,570.6 972.5,574.8 972.6,576.2 972.7,573.9 972.9,581.3 973.0,575.7 973.1,578.9 973.3,568.5 973.4,573.5 973.5,575.2 973.7,576.3 973.8,583.2 973.9,573.5 974.1,570.8 974.2,577.9 974.3,573.6 974.5,573.5 974.6,580.4 974.7,572.9 974.9,571.6 975.0,575.0 975.1,575.9 975.3,573.4 975.4,580.4 975.5,575.4 975.7,572.6 975.8,579.5 975.9,572.8 976.1,577.0 976.2,582.0 976.3,576.1 976.5,578.7 976.6,574.8 976.7,579.3 976.9,572.6 977.0,578.0 977.1,574.7 977.3,577.6 977.4,576.7 977.5,572.2 977.7,575.1 977.8,577.0 977.9,579.6 978.1,572.3 978.2,573.6 978.3,576.8 978.5,575.1 978.6,578.9 978.7,578.9 978.8,578.3 979.0,574.8 979.1,574.9 979.2,578.1 979.4,573.6 979.5,573.5 979.6,575.3 979.8,572.7 979.9,576.7 980.0,576.2 980.2,574.4 980.3,576.0 980.4,573.5 980.6,579.6 980.7,571.6 980.8,578.2 981.0,576.4 981.1,580.0 981.2,574.1 981.4,572.1 981.5,572.7 981.6,573.4 981.8,580.6 981.9,578.2 982.0,577.3 982.2,578.7 982.3,572.5 982.4,575.4 982.6,576.0 982.7,574.5 982.8,578.8 983.0,558.1 983.1,578.6 983.2,574.4 983.4,574.9 983.5,574.2 983.6,572.7 983.8,580.0 983.9,577.6 984.0,575.5 984.2,580.0 984.3,577.6 984.4,572.9 984.6,572.7 984.7,572.7 984.8,575.8 985.0,576.6 985.1,572.7 985.2,577.1 985.4,575.0 985.5,572.0 985.6,577.1 985.8,577.8 985.9,576.0 986.0,574.2 986.2,574.6 986.3,575.5 986.4,574.3 986.6,556.1 986.7,578.6 986.8,575.5 987.0,578.8 987.1,580.1 987.2,579.7 987.4,578.8 987.5,576.6 987.6,579.1 987.8,575.3 987.9,571.0 988.0,576.5 988.2,572.2 988.3,575.2 988.4,579.4 988.6,576.8 988.7,579.0 988.8,573.8 989.0,579.5 989.1,565.0 989.2,574.3 989.4,582.2 989.5,573.7 989.6,571.4 989.8,578.5 989.9,573.1 990.0,581.5 990.2,575.4 990.3,581.1 990.4,574.7 990.6,581.5 990.7,584.0 990.8,574.9 991.0,569.3 991.1,577.9 991.2,573.6 991.4,575.8 991.5,577.1 991.6,574.3 991.8,571.2 991.9,579.9 992.0,574.5 992.2,575.1 992.3,580.4 992.4,571.3 992.6,570.3 992.7,579.0 992.8,571.0 993.0,576.0 993.1,576.7 993.2,571.7 993.4,575.5 993.5,575.2 993.6,571.6 993.8,572.3 993.9,573.5 994.0,580.4 994.2,580.9 994.3,572.8 994.4,579.0 994.6,575.8 994.7,583.9 994.8,576.8 995.0,580.1 995.1,571.3 995.2,579.3 995.4,576.6 995.5,576.8 995.6,572.6 995.8,580.5 995.9,576.4 996.0,576.9 996.2,574.7 996.3,574.8 996.4,577.7 996.6,575.6 996.7,577.4 996.8,574.9 997.0,576.6 997.1,578.3 997.2,576.4 997.4,575.2 997.5,569.5 997.6,577.8 997.8,575.4 997.9,571.9 998.0,582.6 998.2,581.5 998.3,579.9 998.4,576.7 998.6,569.0 998.7,575.1 998.8,572.7 999.0,577.0 999.1,583.7 999.2,583.3 999.4,573.3 999.5,575.8 999.6,580.2 999.8,573.0 999.9,581.0 1000.0,572.9 1000.2,572.0 1000.3,578.7 1000.4,579.7 1000.6,573.8 1000.7,579.7 1000.8,573.8 1001.0,580.0 1001.1,574.0 1001.2,576.1 1001.4,577.7 1001.5,579.1 1001.6,575.7 1001.8,582.1 1001.9,577.2 1002.0,577.6 1002.2,574.4 1002.3,580.2 1002.4,571.3 1002.6,577.3 1002.7,579.8 1002.8,572.3 1003.0,571.4 1003.1,577.0 1003.2,579.1 1003.4,576.4 1003.5,578.5 1003.6,577.4 1003.8,571.8 1003.9,575.3 1004.0,576.0 1004.2,575.4 1004.3,576.6 1004.4,573.9 1004.6,573.8 1004.7,577.6 1004.8,576.1 1005.0,569.2 1005.1,575.2 1005.2,577.0 1005.4,574.5 1005.5,576.5 1005.6,579.8 1005.8,574.5 1005.9,579.2 1006.0,578.0 1006.2,575.5 1006.3,576.9 1006.4,578.8 1006.6,578.2 1006.7,578.3 1006.8,573.0 1007.0,578.7 1007.1,578.2 1007.2,570.4 1007.4,578.2 1007.5,572.0 1007.6,572.6 1007.8,577.0 1007.9,580.8 1008.0,575.2 1008.2,574.5 1008.3,573.6 1008.4,576.3 1008.6,572.9 1008.7,572.4 1008.8,579.7 1009.0,572.3 1009.1,576.0 1009.2,578.3 1009.4,577.5 1009.5,570.9 1009.6,573.6 1009.8,581.9 1009.9,576.3 1010.0,577.0 1010.2,577.1 1010.3,578.1 1010.4,581.0 1010.6,574.0 1010.7,579.4 1010.8,577.7 1011.0,578.4 1011.1,578.8 1011.2,574.4 1011.4,575.4 1011.5,578.6 1011.6,579.4 1011.8,578.0 1011.9,573.7 1012.0,576.2 1012.1,575.9 1012.3,577.6 1012.4,577.4 1012.5,576.0 1012.7,582.2 1012.8,571.8 1012.9,579.0 1013.1,578.3 1013.2,572.6 1013.3,576.0 1013.5,576.5 1013.6,578.4 1013.7,581.3 1013.9,576.1 1014.0,573.1 1014.1,579.4 1014.3,572.6 1014.4,580.0 1014.5,578.9 1014.7,575.1 1014.8,576.7 1014.9,574.6 1015.1,578.9 1015.2,579.8 1015.3,587.9 1015.5,580.3 1015.6,579.9 1015.7,581.0 1015.9,575.8 1016.0,578.7 1016.1,582.7 1016.3,569.2 1016.4,579.2 1016.5,580.5 1016.7,573.0 1016.8,573.2 1016.9,580.2 1017.1,589.7 1017.2,579.7 1017.3,573.3 1017.5,577.7 1017.6,579.1 1017.7,576.8 1017.9,573.1 1018.0,580.9 1018.1,577.9 1018.3,580.9 1018.4,570.2 1018.5,571.3 1018.7,573.9 1018.8,577.1 1018.9,574.8 1019.1,583.1 1019.2,575.9 1019.3,580.8 1019.5,580.7 1019.6,578.9 1019.7,577.8 1019.9,575.0 1020.0,574.7 1020.1,576.0 1020.3,579.6 1020.4,574.7 1020.5,577.1 1020.7,573.2 1020.8,579.5 1020.9,585.1 1021.1,578.2 1021.2,570.3 1021.3,575.4 1021.5,577.4 1021.6,574.1 1021.7,575.3 1021.9,575.4 1022.0,578.3 1022.1,576.6 1022.3,576.2 1022.4,578.7 1022.5,580.2 1022.7,576.4 1022.8,573.9 1022.9,574.9 1023.1,575.3 1023.2,575.3 1023.3,569.0 1023.5,576.0 1023.6,573.7 1023.7,570.9 1023.9,576.7 1024.0,576.0 1024.1,573.7 1024.3,571.7 1024.4,575.9 1024.5,575.7 1024.7,576.6 1024.8,580.5 1024.9,573.5 1025.1,577.6 1025.2,582.0 1025.3,577.3 1025.5,582.0 1025.6,579.9 1025.7,576.8 1025.9,579.6 1026.0,573.6 1026.1,581.2 1026.3,576.0 1026.4,575.2 1026.5,572.4 1026.7,574.1 1026.8,576.1 1026.9,576.6 1027.1,577.0 1027.2,573.4 1027.3,578.8 1027.5,575.3 1027.6,577.1 1027.7,436.2 1027.9,436.2 1028.0,570.4 1028.1,578.8 1028.3,576.1 1028.4,576.0 1028.5,575.0 1028.7,575.5 1028.8,575.6 1028.9,573.9 1029.1,581.4 1029.2,576.8 1029.3,580.6 1029.5,576.1 1029.6,580.4 1029.7,579.7 1029.9,577.0 1030.0,572.7 1030.1,575.1 1030.3,576.0 1030.4,572.6 1030.5,579.7 1030.7,583.1 1030.8,578.1 1030.9,577.7 1031.1,573.2 1031.2,570.4 1031.3,580.9 1031.5,569.4 1031.6,572.2 1031.7,574.3 1031.9,575.8 1032.0,569.6 1032.1,576.6 1032.3,578.3 1032.4,576.5 1032.5,581.0 1032.7,575.5 1032.8,577.2 1032.9,575.9 1033.1,575.8 1033.2,580.1 1033.3,572.9 1033.5,579.9 1033.6,574.2 1033.7,581.7 1033.9,575.8 1034.0,579.4 1034.1,576.8 1034.3,578.8 1034.4,583.4 1034.5,580.2 1034.7,576.7 1034.8,575.0 1034.9,581.3 1035.1,583.3 1035.2,579.5 1035.3,577.5 1035.5,578.8 1035.6,579.3 1035.7,574.3 1035.9,574.0 1036.0,574.7 1036.1,579.7 1036.3,576.7 1036.4,577.5 1036.5,581.2 1036.7,574.3 1036.8,576.6 1036.9,578.4 1037.1,572.6 1037.2,574.6 1037.3,574.3 1037.5,573.3 1037.6,574.8 1037.7,580.7 1037.9,578.1 1038.0,573.9 1038.1,579.2 1038.3,576.8 1038.4,575.7 1038.5,572.6 1038.7,573.0 1038.8,574.2 1038.9,577.5 1039.1,574.2 1039.2,575.3 1039.3,593.9 1039.5,572.8 1039.6,575.4 1039.7,579.2 1039.9,573.1 1040.0,577.7 1040.1,575.1 1040.3,581.5 1040.4,577.0 1040.5,579.8 1040.7,579.9 1040.8,582.7 1040.9,570.5 1041.1,577.4 1041.2,576.2 1041.3,573.6 1041.5,577.3 1041.6,575.4 1041.7,581.0 1041.9,576.4 1042.0,578.2 1042.1,575.4 1042.3,576.4 1042.4,581.1 1042.5,582.5 1042.7,580.0 1042.8,574.7 1042.9,575.7 1043.1,575.7 1043.2,583.0 1043.3,585.0 1043.5,578.8 1043.6,578.0 1043.7,578.8 1043.9,575.9 1044.0,577.5 1044.1,580.5 1044.3,579.6 1044.4,576.5 1044.5,576.8 1044.7,577.2 1044.8,570.2 1044.9,577.8 1045.0,576.6 1045.2,580.0 1045.3,578.1 1045.4,575.4 1045.6,575.3 1045.7,577.5 1045.8,575.8 1046.0,576.8 1046.1,582.6 1046.2,586.8 1046.4,570.0 1046.5,574.5 1046.6,577.2 1046.8,582.2 1046.9,580.8 1047.0,572.9 1047.2,585.4 1047.3,578.0 1047.4,574.4 1047.6,576.6 1047.7,574.7 1047.8,577.4 1048.0,569.8 1048.1,580.1 1048.2,581.1 1048.4,576.2 1048.5,572.7 1048.6,577.2 1048.8,573.8 1048.9,578.6 1049.0,580.6 1049.2,572.8 1049.3,572.3 1049.4,572.4 1049.6,578.3 1049.7,580.5 1049.8,580.5 1050.0,577.7 1050.1,575.2 1050.2,575.5 1050.4,581.3 1050.5,576.4 1050.6,576.9 1050.8,576.7 1050.9,577.1 1051.0,577.6 1051.2,575.2 1051.3,576.6 1051.4,576.3 1051.6,579.1 1051.7,575.8 1051.8,577.4 1052.0,583.3 1052.1,575.5 1052.2,577.8 1052.4,574.2 1052.5,577.5 1052.6,577.3 1052.8,576.3 1052.9,577.0 1053.0,578.3 1053.2,582.4 1053.3,571.4 1053.4,581.7 1053.6,578.0 1053.7,575.0 1053.8,575.8 1054.0,575.3 1054.1,574.7 1054.2,573.2 1054.4,576.1 1054.5,568.2 1054.6,580.0 1054.8,576.3 1054.9,578.1 1055.0,578.6 1055.2,576.1 1055.3,572.6 1055.4,579.1 1055.6,579.1 1055.7,574.8 1055.8,575.3 1056.0,571.1 1056.1,573.9 1056.2,576.3 1056.4,578.0 1056.5,576.3 1056.6,577.5 1056.8,581.1 1056.9,576.9 1057.0,577.5 1057.2,577.7 1057.3,578.3 1057.4,571.9 1057.6,574.9 1057.7,574.1 1057.8,578.8 1058.0,580.0 1058.1,577.8 1058.2,576.2 1058.4,578.0 1058.5,577.5 1058.6,574.1 1058.8,576.1 1058.9,579.9 1059.0,578.2 1059.2,578.9 1059.3,576.4 1059.4,580.5 1059.6,577.5 1059.7,574.9 1059.8,576.9 1060.0,579.7 1060.1,578.8 1060.2,576.6 1060.4,575.5 1060.5,574.4 1060.6,577.4 1060.8,580.9 1060.9,572.7 1061.0,576.0 1061.2,575.7 1061.3,576.0 1061.4,580.1 1061.6,577.9 1061.7,576.2 1061.8,573.8 1062.0,576.8 1062.1,586.3 1062.2,577.7 1062.4,575.9 1062.5,573.0 1062.6,574.8 1062.8,569.4 1062.9,572.6 1063.0,572.9 1063.2,574.1 1063.3,581.1 1063.4,574.4 1063.6,575.1 1063.7,578.5 1063.8,575.2 1064.0,575.7 1064.1,578.3 1064.2,577.3 1064.4,577.7 1064.5,576.2 1064.6,578.2 1064.8,575.3 1064.9,582.7 1065.0,577.8 1065.2,582.0 1065.3,578.4 1065.4,575.3 1065.6,576.8 1065.7,577.2 1065.8,576.7 1066.0,572.2 1066.1,580.2 1066.2,574.2 1066.4,581.4 1066.5,578.3 1066.6,576.4 1066.8,579.4 1066.9,576.3 1067.0,574.7 1067.2,580.5 1067.3,577.1 1067.4,578.0 1067.6,582.7 1067.7,577.4 1067.8,579.3 1068.0,572.9 1068.1,579.5 1068.2,571.8 1068.4,578.5 1068.5,571.0 1068.6,575.2 1068.8,575.5 1068.9,574.4 1069.0,574.2 1069.2,572.6 1069.3,571.7 1069.4,577.9 1069.6,580.6 1069.7,584.9 1069.8,578.0 1070.0,574.6 1070.1,575.7 1070.2,576.5 1070.4,577.9 1070.5,578.8 1070.6,577.7 1070.8,575.7 1070.9,582.1 1071.0,574.6 1071.2,581.2 1071.3,577.3 1071.4,578.7 1071.6,577.9 1071.7,580.0 1071.8,580.3 1072.0,577.5 1072.1,580.1 1072.2,569.4 1072.4,578.1 1072.5,578.8 1072.6,578.5 1072.8,580.1 1072.9,584.2 1073.0,577.6 1073.2,575.9 1073.3,581.3 1073.4,576.8 1073.6,580.5 1073.7,576.9 1073.8,575.7 1074.0,575.4 1074.1,575.5 1074.2,578.9 1074.4,574.2 1074.5,578.2 1074.6,575.8 1074.8,574.7 1074.9,577.7 1075.0,580.7 1075.2,575.0 1075.3,580.2 1075.4,579.5 1075.6,580.1 1075.7,574.3 1075.8,577.3 1076.0,583.5 1076.1,574.6 1076.2,570.6 1076.4,571.4 1076.5,578.5 1076.6,576.6 1076.8,575.3 1076.9,574.1 1077.0,576.7 1077.2,580.1 1077.3,574.5 1077.4,574.9 1077.6,580.8 1077.7,577.9 1077.8,576.0 1078.0,576.8 1078.1,575.2 1078.2,574.4 1078.4,575.1 1078.5,577.1 1078.6,580.8 1078.7,574.9 1078.9,572.5 1079.0,570.8 1079.1,576.8 1079.3,576.9 1079.4,572.4 1079.5,572.4 1079.7,575.7 1079.8,574.6 1079.9,579.0 1080.1,575.0 1080.2,579.2 1080.3,577.2 1080.5,577.1 1080.6,578.1 1080.7,583.1 1080.9,579.2 1081.0,575.7 1081.1,576.9 1081.3,577.9 1081.4,575.4 1081.5,574.6 1081.7,574.2 1081.8,579.1 1081.9,576.6 1082.1,577.7 1082.2,579.3 1082.3,581.2 1082.5,577.0 1082.6,579.3 1082.7,570.2 1082.9,577.0 1083.0,577.4 1083.1,577.9 1083.3,571.1 1083.4,579.5 1083.5,577.2 1083.7,579.0 1083.8,577.1 1083.9,576.8 1084.1,573.4 1084.2,580.9 1084.3,576.7 1084.5,571.8 1084.6,578.2 1084.7,577.2 1084.9,579.3 1085.0,584.5 1085.1,577.0 1085.3,573.1 1085.4,578.1 1085.5,582.2 1085.7,575.8 1085.8,576.4 1085.9,573.6 1086.1,573.9 1086.2,577.4 1086.3,575.4 1086.5,582.0 1086.6,573.3 1086.7,576.1 1086.9,573.4 1087.0,573.4 1087.1,577.5 1087.3,577.1 1087.4,579.2 1087.5,582.8 1087.7,577.0 1087.8,576.1 1087.9,579.9 1088.1,595.9 1088.2,576.3 1088.3,575.2 1088.5,578.9 1088.6,581.9 1088.7,574.2 1088.9,574.7 1089.0,576.9 1089.1,577.8 1089.3,577.4 1089.4,577.0 1089.5,578.1 1089.7,582.6 1089.8,574.2 1089.9,589.8 1090.1,577.6 1090.2,577.5 1090.3,575.8 1090.5,581.4 1090.6,572.9 1090.7,574.6 1090.9,574.2 1091.0,572.7 1091.1,578.9 1091.3,585.9 1091.4,575.5 1091.5,572.6 1091.7,573.0 1091.8,578.1 1091.9,562.7 1092.1,575.6 1092.2,581.9 1092.3,578.5 1092.5,578.4 1092.6,571.7 1092.7,578.4 1092.9,571.7 1093.0,576.4 1093.1,581.5 1093.3,569.8 1093.4,579.4 1093.5,574.6 1093.7,571.3 1093.8,578.0 1093.9,580.1 1094.1,573.3 1094.2,576.2 1094.3,580.1 1094.5,579.6 1094.6,577.6 1094.7,573.5 1094.9,577.3 1095.0,574.4 1095.1,571.4 1095.3,572.6 1095.4,572.1 1095.5,572.7 1095.7,581.2 1095.8,572.7 1095.9,575.4 1096.1,576.7 1096.2,579.6 1096.3,581.1 1096.5,579.7 1096.6,576.4 1096.7,579.9 1096.9,578.8 1097.0,578.2 1097.1,574.3 1097.3,577.2 1097.4,576.8 1097.5,572.3 1097.7,577.3 1097.8,574.5 1097.9,579.5 1098.1,575.3 1098.2,576.0 1098.3,575.8 1098.5,577.7 1098.6,579.4 1098.7,577.2 1098.9,577.7 1099.0,573.2 1099.1,573.6 1099.3,579.9 1099.4,574.4 1099.5,577.7 1099.7,574.9 1099.8,577.7 1099.9,580.7 1100.1,573.2 1100.2,574.9 1100.3,579.9 1100.5,581.9 1100.6,577.9 1100.7,579.8 1100.9,577.3 1101.0,574.4 1101.1,571.8 1101.3,577.3 1101.4,572.1 1101.5,572.7 1101.7,577.5 1101.8,581.2 1101.9,573.7 1102.1,574.4 1102.2,569.1 1102.3,571.9 1102.5,573.9 1102.6,571.1 1102.7,579.3 1102.9,575.6 1103.0,577.0 1103.1,570.9 1103.3,574.5 1103.4,585.4 1103.5,572.0 1103.7,578.9 1103.8,573.8 1103.9,577.6 1104.1,575.4 1104.2,574.2 1104.3,575.5 1104.5,579.0 1104.6,571.9 1104.7,574.9 1104.9,576.2 1105.0,574.0 1105.1,577.7 1105.3,570.4 1105.4,575.4 1105.5,575.0 1105.7,575.0 1105.8,578.8 1105.9,579.6 1106.1,575.4 1106.2,575.0 1106.3,572.0 1106.5,574.7 1106.6,579.3 1106.7,574.5 1106.9,573.6 1107.0,573.0 1107.1,575.0 1107.3,579.7 1107.4,572.5 1107.5,578.2 1107.7,574.3 1107.8,580.7 1107.9,573.7 1108.1,578.4 1108.2,572.8 1108.3,570.7 1108.5,572.5 1108.6,579.5 1108.7,578.8 1108.9,578.6 1109.0,574.0 1109.1,574.9 1109.3,575.5 1109.4,575.0 1109.5,574.2 1109.7,574.0 1109.8,570.9 1109.9,576.1 1110.1,575.4 1110.2,581.5 1110.3,579.9 1110.5,578.0 1110.6,579.5 1110.7,575.3 1110.9,572.8 1111.0,577.3 1111.1,577.4 1111.3,577.5 1111.4,575.6 1111.5,577.6 1111.7,574.7 1111.8,575.0 1111.9,574.9 1112.0,573.6 1112.2,575.8 1112.3,575.5 1112.4,570.7 1112.6,576.1 1112.7,573.5 1112.8,575.8 1113.0,577.3 1113.1,577.3 1113.2,578.4 1113.4,575.9 1113.5,577.7 1113.6,577.2 1113.8,572.3 1113.9,576.3 1114.0,572.5 1114.2,575.1 1114.3,573.3 1114.4,577.7 1114.6,575.5 1114.7,568.0 1114.8,573.4 1115.0,572.9 1115.1,575.2 1115.2,573.3 1115.4,579.4 1115.5,578.4 1115.6,574.6 1115.8,573.4 1115.9,577.1 1116.0,576.4 1116.2,577.0 1116.3,576.4 1116.4,579.5 1116.6,580.2 1116.7,576.1 1116.8,581.1 1117.0,578.8 1117.1,577.8 1117.2,579.0 1117.4,575.1 1117.5,577.2 1117.6,576.1 1117.8,578.9 1117.9,578.1 1118.0,574.3 1118.2,574.8 1118.3,577.3 1118.4,574.8 1118.6,575.3 1118.7,575.4 1118.8,571.1 1119.0,575.2 1119.1,574.6 1119.2,574.6 1119.4,576.6 1119.5,579.4 1119.6,573.8 1119.8,575.1 1119.9,575.7 1120.0,575.8 1120.2,575.8 1120.3,578.5 1120.4,575.0 1120.6,581.3 1120.7,575.9 1120.8,580.3 1121.0,576.9 1121.1,573.7 1121.2,576.6 1121.4,577.3 1121.5,574.3 1121.6,576.7 1121.8,577.1 1121.9,577.0 1122.0,571.3 1122.2,573.9 1122.3,574.4 1122.4,579.4 1122.6,574.0 1122.7,579.7 1122.8,574.4 1123.0,579.2 1123.1,570.0 1123.2,580.9 1123.4,572.2 1123.5,573.4 1123.6,581.2 1123.8,576.6 1123.9,571.5 1124.0,572.4 1124.2,580.8 1124.3,577.4 1124.4,579.3 1124.6,578.9 1124.7,577.7 1124.8,570.3 1125.0,575.4 1125.1,576.5 1125.2,576.8 1125.4,573.8 1125.5,573.7 1125.6,578.6 1125.8,571.4 1125.9,579.0 1126.0,576.6 1126.2,574.4 1126.3,570.6 1126.4,576.8 1126.6,574.9 1126.7,571.9 1126.8,573.9 1127.0,572.4 1127.1,572.6 1127.2,575.0 1127.4,573.9 1127.5,573.0 1127.6,579.6 1127.8,570.9 1127.9,581.7 1128.0,578.5 1128.2,571.4 1128.3,574.4 1128.4,577.7 1128.6,574.6 1128.7,572.5 1128.8,577.4 1129.0,573.4 1129.1,576.1 1129.2,576.0 1129.4,575.9 1129.5,572.4 1129.6,579.1 1129.8,576.8 1129.9,573.7 1130.0,579.3 1130.2,580.4 1130.3,574.0 1130.4,575.7 1130.6,576.1 1130.7,575.2 1130.8,578.6 1131.0,566.9 1131.1,578.6 1131.2,577.0 1131.4,579.9 1131.5,576.9 1131.6,571.1 1131.8,575.6 1131.9,573.8 1132.0,577.1 1132.2,570.2 1132.3,575.1 1132.4,579.4 1132.6,573.3 1132.7,576.7 1132.8,573.8 1133.0,589.3 1133.1,574.8 1133.2,575.2 1133.4,578.3 1133.5,580.1 1133.6,572.7 1133.8,576.0 1133.9,574.7 1134.0,577.0 1134.2,581.7 1134.3,579.4 1134.4,571.4 1134.6,577.9 1134.7,576.7 1134.8,580.0 1135.0,562.7 1135.1,576.7 1135.2,576.2 1135.4,575.8 1135.5,577.5 1135.6,577.3 1135.8,575.6 1135.9,574.6 1136.0,576.0 1136.2,570.3 1136.3,574.9 1136.4,575.1 1136.6,577.5 1136.7,572.4 1136.8,578.6 1137.0,580.4 1137.1,578.5 1137.2,573.7 1137.4,579.0 1137.5,571.6 1137.6,575.6 1137.8,580.1 1137.9,576.2 1138.0,570.2 1138.2,578.1 1138.3,589.0 1138.4,574.0 1138.6,571.6 1138.7,572.4 1138.8,576.5 1139.0,574.9 1139.1,574.5 1139.2,436.2 1139.4,436.2 1139.5,575.8 1139.6,571.6 1139.8,576.5 1139.9,573.7 1140.0,578.3 1140.2,577.8 1140.3,574.2 1140.4,578.2 1140.6,572.8 1140.7,577.1 1140.8,575.2 1141.0,575.7 1141.1,576.4 1141.2,575.0 1141.4,572.2 1141.5,566.1 1141.6,579.0 1141.8,574.5 1141.9,576.0 1142.0,578.2 1142.2,574.6 1142.3,578.1 1142.4,574.7 1142.6,571.7 1142.7,581.5 1142.8,574.7 1143.0,574.1 1143.1,578.3 1143.2,573.8 1143.4,574.3 1143.5,576.4 1143.6,571.7 1143.8,579.3 1143.9,573.5 1144.0,576.1 1144.2,577.4 1144.3,575.9 1144.4,576.4 1144.6,572.9 1144.7,579.9 1144.8,575.9 1145.0,576.7 1145.1,570.6 1145.2,578.7 1145.3,572.2 1145.5,580.6 1145.6,574.3 1145.7,575.8 1145.9,574.2 1146.0,577.5 1146.1,581.2 1146.3,580.0 1146.4,571.4 1146.5,574.7 1146.7,577.9 1146.8,572.6 1146.9,577.6 1147.1,577.6 1147.2,579.0 1147.3,571.8 1147.5,569.5 1147.6,573.3 1147.7,574.5 1147.9,572.4 1148.0,569.0 1148.1,582.6 1148.3,574.9 1148.4,573.4 1148.5,579.8 1148.7,574.1 1148.8,574.8 1148.9,573.2 1149.1,577.1 1149.2,574.1 1149.3,577.2 1149.5,573.5 1149.6,574.9 1149.7,576.5 1149.9,579.6 1150.0,570.4 1150.1,572.0 1150.3,572.7 1150.4,577.3 1150.5,576.4 1150.7,570.3 1150.8,573.1 1150.9,577.9 1151.1,573.1 1151.2,574.9 1151.3,575.9 1151.5,578.1 1151.6,571.5 1151.7,573.5 1151.9,575.9 1152.0,580.0 1152.1,577.0 1152.3,575.3 1152.4,572.7 1152.5,576.4 1152.7,571.9 1152.8,574.8 1152.9,577.5 1153.1,583.6 1153.2,578.8 1153.3,579.7 1153.5,575.7 1153.6,574.2 1153.7,571.0 1153.9,575.3 1154.0,578.7 1154.1,568.1 1154.3,574.3 1154.4,576.0 1154.5,576.0 1154.7,579.3 1154.8,573.3 1154.9,568.6 1155.1,570.4 1155.2,571.9 1155.3,572.6 1155.5,571.4 1155.6,576.0 1155.7,576.5 1155.9,575.3 1156.0,578.9 1156.1,575.6 1156.3,576.1 1156.4,573.1 1156.5,575.2 1156.7,580.9 1156.8,575.0 1156.9,570.9 1157.1,580.6 1157.2,577.4 1157.3,575.0 1157.5,579.1 1157.6,576.7 1157.7,574.9 1157.9,579.0 1158.0,574.2 1158.1,573.8 1158.3,578.9 1158.4,575.0 1158.5,571.8 1158.7,575.6 1158.8,573.7 1158.9,573.1 1159.1,575.7 1159.2,572.1 1159.3,573.9 1159.5,578.0 1159.6,573.4 1159.7,572.4 1159.9,572.6 1160.0,576.9 1160.1,573.6 1160.3,570.9 1160.4,574.3 1160.5,571.4 1160.7,571.1 1160.8,575.1 1160.9,573.0 1161.1,575.8 1161.2,571.7 1161.3,575.2 1161.5,576.6 1161.6,575.0 1161.7,575.2 1161.9,573.8 1162.0,573.5 1162.1,578.4 1162.3,576.9 1162.4,573.8 1162.5,573.5 1162.7,574.7 1162.8,567.0 1162.9,571.5 1163.1,575.1 1163.2,572.7 1163.3,570.9 1163.5,573.8 1163.6,580.1 1163.7,574.6 1163.9,574.7 1164.0,568.4 1164.1,580.4 1164.3,570.2 1164.4,575.3 1164.5,572.0 1164.7,575.7 1164.8,574.3 1164.9,571.4 1165.1,574.6 1165.2,571.6 1165.3,575.0 1165.5,576.0 1165.6,575.4 1165.7,576.3 1165.9,575.1 1166.0,570.7 1166.1,578.3 1166.3,579.8 1166.4,574.8 1166.5,569.7 1166.7,571.6 1166.8,570.8 1166.9,567.9 1167.1,576.9 1167.2,574.4 1167.3,582.7 1167.5,576.6 1167.6,572.9 1167.7,579.4 1167.9,580.9 1168.0,578.6 1168.1,574.1 1168.3,571.2 1168.4,566.9 1168.5,570.4 1168.7,579.2 1168.8,581.7 1168.9,574.2 1169.1,571.5 1169.2,579.5 1169.3,576.2 1169.5,576.0 1169.6,574.5 1169.7,575.2 1169.9,573.1 1170.0,571.4 1170.1,574.4 1170.3,572.3 1170.4,568.6 1170.5,577.7 1170.7,577.7 1170.8,573.0 1170.9,569.0 1171.1,574.1 1171.2,571.3 1171.3,575.5 1171.5,571.8 1171.6,576.4 1171.7,572.5 1171.9,573.3 1172.0,573.3 1172.1,570.4 1172.3,571.3 1172.4,576.3 1172.5,571.8 1172.7,579.6 1172.8,571.5 1172.9,566.2 1173.1,572.9 1173.2,572.9 1173.3,574.3 1173.5,571.9 1173.6,575.8 1173.7,572.4 1173.9,575.2 1174.0,575.7 1174.1,574.0 1174.3,574.6 1174.4,579.6 1174.5,568.1 1174.7,573.9 1174.8,579.5 1174.9,571.1 1175.1,574.4 1175.2,573.7 1175.3,572.2 1175.5,577.0 1175.6,583.2 1175.7,574.6 1175.9,573.6 1176.0,571.3 1176.1,576.6 1176.3,575.1 1176.4,573.1 1176.5,575.3 1176.7,575.1 1176.8,573.6 1176.9,565.0 1177.1,569.6 1177.2,577.1 1177.3,574.2 1177.5,575.3 1177.6,576.5 1177.7,572.7 1177.9,571.3 1178.0,570.0 1178.1,572.6 1178.2,575.7 1178.4,571.8 1178.5,578.7 1178.6,574.2 1178.8,572.8 1178.9,572.7 1179.0,577.8 1179.2,578.9 1179.3,569.4 1179.4,575.9 1179.6,579.3 1179.7,578.1 1179.8,574.3 1180.0,570.8 1180.1,574.4 1180.2,570.8 1180.4,573.7 1180.5,573.0 1180.6,571.5 1180.8,575.5 1180.9,573.5 1181.0,575.6 1181.2,576.3 1181.3,572.5 1181.4,576.9 1181.6,574.2 1181.7,576.8 1181.8,574.7 1182.0,576.0 1182.1,571.2 1182.2,574.2 1182.4,574.2 1182.5,569.5 1182.6,583.2 1182.8,577.8 1182.9,582.7 1183.0,574.5 1183.2,573.2 1183.3,572.6 1183.4,608.8 1183.6,608.8 1183.7,608.8 1183.8,608.8 1184.0,608.8 1184.1,608.8 1184.2,608.8 1184.4,608.8 1184.5,608.8" fill="none" stroke="#0000ff" stroke-width="1.6" stroke-linejoin="round" clip-path="url(#c3)"/>
<rect x="911.2" y="517" width="273.79999999999995" height="119.70000000000005" fill="none" stroke="#000" stroke-width="1.8"/>
<line x1="911.85" y1="636.70" x2="911.85" y2="643.60" stroke="#000" stroke-width="1.6"/>
<text x="911.85" y="659.60" font-size="10.0" text-anchor="middle">0</text>
<line x1="978.45" y1="636.70" x2="978.45" y2="643.60" stroke="#000" stroke-width="1.6"/>
<text x="978.45" y="659.60" font-size="10.0" text-anchor="middle">500</text>
<line x1="1045.05" y1="636.70" x2="1045.05" y2="643.60" stroke="#000" stroke-width="1.6"/>
<text x="1045.05" y="659.60" font-size="10.0" text-anchor="middle">1000</text>
<line x1="1111.65" y1="636.70" x2="1111.65" y2="643.60" stroke="#000" stroke-width="1.6"/>
<text x="1111.65" y="659.60" font-size="10.0" text-anchor="middle">1500</text>
<line x1="1178.25" y1="636.70" x2="1178.25" y2="643.60" stroke="#000" stroke-width="1.6"/>
<text x="1178.25" y="659.60" font-size="10.0" text-anchor="middle">2000</text>
<line x1="911.20" y1="636.52" x2="904.30" y2="636.52" stroke="#000" stroke-width="1.6"/>
<text x="896.00" y="640.12" font-size="10.0" text-anchor="end">−100</text>
<line x1="911.20" y1="607.90" x2="904.30" y2="607.90" stroke="#000" stroke-width="1.6"/>
<text x="896.00" y="611.50" font-size="10.0" text-anchor="end">0</text>
<line x1="911.20" y1="579.28" x2="904.30" y2="579.28" stroke="#000" stroke-width="1.6"/>
<text x="896.00" y="582.88" font-size="10.0" text-anchor="end">100</text>
<line x1="911.20" y1="550.66" x2="904.30" y2="550.66" stroke="#000" stroke-width="1.6"/>
<text x="896.00" y="554.26" font-size="10.0" text-anchor="end">200</text>
<line x1="911.20" y1="522.04" x2="904.30" y2="522.04" stroke="#000" stroke-width="1.6"/>
<text x="896.00" y="525.64" font-size="10.0" text-anchor="end">300</text>
<text x="1048.10" y="677.80" font-size="10.42" text-anchor="middle">X</text>
<text transform="translate(857.20,577.70) rotate(-90)" font-size="10.42" text-anchor="middle">counts</text>
<text transform="translate(1194.00,575.30) rotate(90)" font-size="10.42" text-anchor="middle">cut in x</text>
<rect x="1115.7" y="519.8" width="65.9" height="16" rx="2" ry="2" fill="#fff" fill-opacity="0.8" stroke="#ccc" stroke-width="1"/>
<line x1="1118.20" y1="527.70" x2="1140.40" y2="527.70" stroke="#0000ff" stroke-width="1.6"/>
<text x="1144.30" y="531.20" font-size="10.0" text-anchor="start">y=550</text>
<polyline points="912.8,779.6 913.0,779.6 913.3,779.6 913.5,779.6 913.8,736.9 914.0,733.5 914.3,722.7 914.5,723.9 914.8,723.2 915.0,723.2 915.3,725.2 915.5,728.2 915.7,727.5 916.0,721.1 916.2,728.6 916.5,727.4 916.7,729.3 917.0,728.6 917.2,727.9 917.5,726.0 917.7,728.0 918.0,728.3 918.2,729.3 918.4,726.8 918.7,732.0 918.9,729.9 919.2,722.6 919.4,730.1 919.7,721.4 919.9,717.4 920.2,731.0 920.4,733.3 920.7,729.1 920.9,721.1 921.1,720.5 921.4,732.1 921.6,725.8 921.9,727.9 922.1,730.0 922.4,734.9 922.6,724.4 922.9,731.1 923.1,727.1 923.4,727.9 923.6,721.6 923.8,724.1 924.1,732.5 924.3,729.3 924.6,724.8 924.8,733.3 925.1,730.0 925.3,727.8 925.6,744.9 925.8,733.1 926.1,734.8 926.3,727.8 926.5,730.9 926.8,725.6 927.0,726.0 927.3,727.0 927.5,729.4 927.8,726.5 928.0,729.6 928.3,732.8 928.5,725.1 928.8,725.9 929.0,721.4 929.2,730.0 929.5,731.6 929.7,734.7 930.0,743.4 930.2,734.3 930.5,728.0 930.7,732.9 931.0,739.1 931.2,727.7 931.5,732.1 931.7,731.3 931.9,731.6 932.2,730.6 932.4,728.5 932.7,736.4 932.9,731.1 933.2,732.1 933.4,726.3 933.7,734.1 933.9,724.7 934.2,728.4 934.4,724.8 934.6,733.2 934.9,727.8 935.1,729.5 935.4,736.1 935.6,731.8 935.9,732.5 936.1,734.4 936.4,733.8 936.6,736.2 936.9,732.8 937.1,730.0 937.3,734.0 937.6,736.8 937.8,727.6 938.1,732.7 938.3,731.3 938.6,732.3 938.8,733.4 939.1,729.4 939.3,733.5 939.6,731.6 939.8,736.9 940.1,737.6 940.3,733.2 940.5,725.1 940.8,731.3 941.0,725.1 941.3,730.4 941.5,730.4 941.8,734.2 942.0,732.2 942.3,725.8 942.5,728.0 942.8,734.5 943.0,734.0 943.2,727.6 943.5,734.3 943.7,729.2 944.0,735.8 944.2,730.4 944.5,727.2 944.7,729.7 945.0,731.9 945.2,732.3 945.5,733.1 945.7,733.0 945.9,728.7 946.2,728.9 946.4,731.6 946.7,737.6 946.9,735.0 947.2,732.1 947.4,733.0 947.7,738.1 947.9,731.0 948.2,724.1 948.4,737.8 948.6,733.2 948.9,727.7 949.1,735.0 949.4,735.1 949.6,733.1 949.9,731.7 950.1,735.2 950.4,730.3 950.6,740.6 950.9,731.6 951.1,732.6 951.3,734.6 951.6,732.7 951.8,733.9 952.1,729.4 952.3,735.8 952.6,734.4 952.8,713.3 953.1,738.3 953.3,735.2 953.6,740.0 953.8,737.5 954.0,739.2 954.3,736.3 954.5,734.2 954.8,733.5 955.0,741.6 955.3,735.5 955.5,731.7 955.8,730.0 956.0,729.9 956.3,740.1 956.5,736.8 956.7,733.0 957.0,731.8 957.2,734.1 957.5,729.9 957.7,734.4 958.0,738.0 958.2,734.8 958.5,732.5 958.7,736.6 959.0,731.3 959.2,745.6 959.4,736.7 959.7,729.6 959.9,732.6 960.2,730.6 960.4,735.3 960.7,740.0 960.9,737.7 961.2,730.5 961.4,742.5 961.7,739.4 961.9,742.2 962.1,738.0 962.4,737.6 962.6,734.1 962.9,739.2 963.1,730.2 963.4,734.0 963.6,738.0 963.9,739.9 964.1,741.8 964.4,736.0 964.6,729.5 964.8,737.1 965.1,740.2 965.3,736.8 965.6,738.5 965.8,739.9 966.1,743.5 966.3,737.0 966.6,731.5 966.8,732.5 967.1,733.4 967.3,736.2 967.5,735.3 967.8,733.4 968.0,737.2 968.3,736.1 968.5,738.5 968.8,733.1 969.0,740.5 969.3,734.8 969.5,734.2 969.8,734.3 970.0,734.8 970.2,739.0 970.5,739.4 970.7,738.9 971.0,738.8 971.2,741.6 971.5,739.2 971.7,739.9 972.0,741.0 972.2,736.4 972.5,740.4 972.7,736.9 972.9,732.6 973.2,731.8 973.4,737.8 973.7,734.3 973.9,737.1 974.2,729.5 974.4,732.2 974.7,734.1 974.9,738.7 975.2,739.0 975.4,736.2 975.6,738.4 975.9,739.2 976.1,735.8 976.4,742.8 976.6,745.5 976.9,742.1 977.1,742.6 977.4,738.8 977.6,741.7 977.9,739.3 978.1,745.9 978.3,733.4 978.6,737.3 978.8,741.9 979.1,737.7 979.3,734.5 979.6,735.9 979.8,739.3 980.1,736.8 980.3,735.9 980.6,743.4 980.8,744.2 981.0,741.3 981.3,735.7 981.5,733.9 981.8,738.8 982.0,733.9 982.3,735.8 982.5,739.6 982.8,742.1 983.0,741.8 983.3,739.2 983.5,734.5 983.7,736.6 984.0,744.3 984.2,744.0 984.5,736.8 984.7,739.0 985.0,743.2 985.2,734.6 985.5,735.0 985.7,737.0 986.0,739.5 986.2,735.2 986.4,741.4 986.7,742.2 986.9,743.4 987.2,733.3 987.4,732.5 987.7,749.1 987.9,738.1 988.2,738.6 988.4,736.9 988.7,736.0 988.9,737.9 989.2,740.7 989.4,742.2 989.6,744.1 989.9,749.8 990.1,740.8 990.4,743.5 990.6,740.5 990.9,741.0 991.1,744.3 991.4,742.5 991.6,739.2 991.9,740.1 992.1,743.9 992.3,743.5 992.6,738.8 992.8,740.0 993.1,739.8 993.3,741.5 993.6,738.3 993.8,740.7 994.1,732.0 994.3,742.8 994.6,743.6 994.8,735.3 995.0,741.4 995.3,744.0 995.5,739.7 995.8,749.6 996.0,739.7 996.3,741.3 996.5,740.4 996.8,744.3 997.0,736.8 997.3,740.4 997.5,741.6 997.7,740.3 998.0,744.6 998.2,742.1 998.5,747.0 998.7,745.6 999.0,740.7 999.2,741.4 999.5,739.2 999.7,744.2 1000.0,742.3 1000.2,744.4 1000.4,741.1 1000.7,739.2 1000.9,738.2 1001.2,740.1 1001.4,744.9 1001.7,741.4 1001.9,745.9 1002.2,749.1 1002.4,741.7 1002.7,742.0 1002.9,739.7 1003.1,739.5 1003.4,746.8 1003.6,745.7 1003.9,742.5 1004.1,742.3 1004.4,741.1 1004.6,747.3 1004.9,743.6 1005.1,740.4 1005.4,736.0 1005.6,747.2 1005.8,737.0 1006.1,743.9 1006.3,748.0 1006.6,738.2 1006.8,746.8 1007.1,747.1 1007.3,740.5 1007.6,739.4 1007.8,742.9 1008.1,745.7 1008.3,748.5 1008.5,742.8 1008.8,751.6 1009.0,748.5 1009.3,739.6 1009.5,741.2 1009.8,739.1 1010.0,742.0 1010.3,747.5 1010.5,741.8 1010.8,750.0 1011.0,741.1 1011.2,738.8 1011.5,747.2 1011.7,740.0 1012.0,743.6 1012.2,744.3 1012.5,750.8 1012.7,744.3 1013.0,740.7 1013.2,749.9 1013.5,745.6 1013.7,746.4 1013.9,749.7 1014.2,740.2 1014.4,743.9 1014.7,743.8 1014.9,740.5 1015.2,746.7 1015.4,732.5 1015.7,745.7 1015.9,748.2 1016.2,741.8 1016.4,742.8 1016.6,747.5 1016.9,747.3 1017.1,741.2 1017.4,743.1 1017.6,742.7 1017.9,741.1 1018.1,746.3 1018.4,739.7 1018.6,744.1 1018.9,741.6 1019.1,747.5 1019.3,741.6 1019.6,743.2 1019.8,735.5 1020.1,744.8 1020.3,738.9 1020.6,742.0 1020.8,738.7 1021.1,743.5 1021.3,742.6 1021.6,752.2 1021.8,748.9 1022.0,740.7 1022.3,742.9 1022.5,741.7 1022.8,745.4 1023.0,741.7 1023.3,745.8 1023.5,744.7 1023.8,740.2 1024.0,740.7 1024.3,746.1 1024.5,744.4 1024.7,743.8 1025.0,745.2 1025.2,745.0 1025.5,754.9 1025.7,742.7 1026.0,748.5 1026.2,748.2 1026.5,740.3 1026.7,738.3 1027.0,738.3 1027.2,743.6 1027.4,746.8 1027.7,742.3 1027.9,739.4 1028.2,744.5 1028.4,746.4 1028.7,750.9 1028.9,751.0 1029.2,738.9 1029.4,750.3 1029.7,747.5 1029.9,746.2 1030.1,744.3 1030.4,749.8 1030.6,743.2 1030.9,743.2 1031.1,745.0 1031.4,747.5 1031.6,746.6 1031.9,752.2 1032.1,743.1 1032.4,747.2 1032.6,750.2 1032.8,745.6 1033.1,731.8 1033.3,744.2 1033.6,743.3 1033.8,741.4 1034.1,747.4 1034.3,744.9 1034.6,744.7 1034.8,750.8 1035.1,741.8 1035.3,746.9 1035.5,744.8 1035.8,744.7 1036.0,748.7 1036.3,742.9 1036.5,742.4 1036.8,745.2 1037.0,756.1 1037.3,741.1 1037.5,746.4 1037.8,748.2 1038.0,748.0 1038.3,749.8 1038.5,747.3 1038.7,743.8 1039.0,750.0 1039.2,745.3 1039.5,748.2 1039.7,747.0 1040.0,747.5 1040.2,745.1 1040.5,742.6 1040.7,746.3 1041.0,743.1 1041.2,741.0 1041.4,751.4 1041.7,743.5 1041.9,747.4 1042.2,747.0 1042.4,742.9 1042.7,747.2 1042.9,748.6 1043.2,741.9 1043.4,742.7 1043.7,745.0 1043.9,736.4 1044.1,750.0 1044.4,752.2 1044.6,747.2 1044.9,750.5 1045.1,745.2 1045.4,748.6 1045.6,748.7 1045.9,746.6 1046.1,749.6 1046.4,753.4 1046.6,749.2 1046.8,744.2 1047.1,745.9 1047.3,743.4 1047.6,740.8 1047.8,743.6 1048.1,747.0 1048.3,749.5 1048.6,745.2 1048.8,741.1 1049.1,741.8 1049.3,743.6 1049.5,749.8 1049.8,744.9 1050.0,744.5 1050.3,742.7 1050.5,751.5 1050.8,749.5 1051.0,746.6 1051.3,746.7 1051.5,749.3 1051.8,745.4 1052.0,748.3 1052.2,743.3 1052.5,749.0 1052.7,746.6 1053.0,754.8 1053.2,746.7 1053.5,749.8 1053.7,744.9 1054.0,748.1 1054.2,743.2 1054.5,749.4 1054.7,752.7 1054.9,746.8 1055.2,745.6 1055.4,750.3 1055.7,752.3 1055.9,745.1 1056.2,744.1 1056.4,745.2 1056.7,747.5 1056.9,747.9 1057.2,742.1 1057.4,745.1 1057.6,751.2 1057.9,751.8 1058.1,745.8 1058.4,745.5 1058.6,750.3 1058.9,750.8 1059.1,744.7 1059.4,749.3 1059.6,745.3 1059.9,752.2 1060.1,751.8 1060.3,754.4 1060.6,748.4 1060.8,749.8 1061.1,754.3 1061.3,747.8 1061.6,750.3 1061.8,749.2 1062.1,743.5 1062.3,745.0 1062.6,746.7 1062.8,749.7 1063.0,752.8 1063.3,750.9 1063.5,749.9 1063.8,744.1 1064.0,751.9 1064.3,750.6 1064.5,748.7 1064.8,747.3 1065.0,744.9 1065.3,744.0 1065.5,749.3 1065.7,741.9 1066.0,746.4 1066.2,751.6 1066.5,752.3 1066.7,750.3 1067.0,749.8 1067.2,746.1 1067.5,751.8 1067.7,750.9 1068.0,752.0 1068.2,748.0 1068.4,754.1 1068.7,747.1 1068.9,751.8 1069.2,749.8 1069.4,747.5 1069.7,748.0 1069.9,739.2 1070.2,752.4 1070.4,756.5 1070.7,753.8 1070.9,746.3 1071.1,753.0 1071.4,745.6 1071.6,750.0 1071.9,746.6 1072.1,754.7 1072.4,745.6 1072.6,745.2 1072.9,752.7 1073.1,744.7 1073.4,740.0 1073.6,749.4 1073.8,752.8 1074.1,751.6 1074.3,750.5 1074.6,748.5 1074.8,743.0 1075.1,751.0 1075.3,750.3 1075.6,754.5 1075.8,751.4 1076.1,747.9 1076.3,756.8 1076.5,747.2 1076.8,746.5 1077.0,745.4 1077.3,751.7 1077.5,755.3 1077.8,750.7 1078.0,753.4 1078.3,756.0 1078.5,752.5 1078.8,754.8 1079.0,743.0 1079.2,747.2 1079.5,746.8 1079.7,753.8 1080.0,745.1 1080.2,751.3 1080.5,746.9 1080.7,753.6 1081.0,747.8 1081.2,756.0 1081.5,750.7 1081.7,750.9 1081.9,754.9 1082.2,759.7 1082.4,752.1 1082.7,751.5 1082.9,747.5 1083.2,745.6 1083.4,750.9 1083.7,745.7 1083.9,746.7 1084.2,747.6 1084.4,744.6 1084.6,755.6 1084.9,745.6 1085.1,749.0 1085.4,751.8 1085.6,751.0 1085.9,746.8 1086.1,746.2 1086.4,747.9 1086.6,754.6 1086.9,755.7 1087.1,750.3 1087.4,748.3 1087.6,753.0 1087.8,747.4 1088.1,748.4 1088.3,748.9 1088.6,753.3 1088.8,740.6 1089.1,747.2 1089.3,745.9 1089.6,749.4 1089.8,755.2 1090.1,749.4 1090.3,747.7 1090.5,751.3 1090.8,754.9 1091.0,748.9 1091.3,748.6 1091.5,755.3 1091.8,753.5 1092.0,756.1 1092.3,749.8 1092.5,750.4 1092.8,744.9 1093.0,754.3 1093.2,746.4 1093.5,751.9 1093.7,750.2 1094.0,755.5 1094.2,751.1 1094.5,753.1 1094.7,751.6 1095.0,750.6 1095.2,749.5 1095.5,748.3 1095.7,751.4 1095.9,754.5 1096.2,747.7 1096.4,751.1 1096.7,753.5 1096.9,746.6 1097.2,750.4 1097.4,748.9 1097.7,757.5 1097.9,753.7 1098.2,744.4 1098.4,749.8 1098.6,749.9 1098.9,754.1 1099.1,752.1 1099.4,750.3 1099.6,751.9 1099.9,752.1 1100.1,757.9 1100.4,754.6 1100.6,753.4 1100.9,749.8 1101.1,750.0 1101.3,751.9 1101.6,754.5 1101.8,754.5 1102.1,751.1 1102.3,756.8 1102.6,752.8 1102.8,735.5 1103.1,752.9 1103.3,746.2 1103.6,752.6 1103.8,749.1 1104.0,746.5 1104.3,750.3 1104.5,752.2 1104.8,756.7 1105.0,746.5 1105.3,756.2 1105.5,759.5 1105.8,748.6 1106.0,757.5 1106.3,756.6 1106.5,755.0 1106.7,756.7 1107.0,760.2 1107.2,751.8 1107.5,750.8 1107.7,749.9 1108.0,752.7 1108.2,754.1 1108.5,754.6 1108.7,748.4 1109.0,749.8 1109.2,754.3 1109.4,751.7 1109.7,757.0 1109.9,751.1 1110.2,756.7 1110.4,752.1 1110.7,753.8 1110.9,762.5 1111.2,754.8 1111.4,753.1 1111.7,755.8 1111.9,755.6 1112.1,753.5 1112.4,753.7 1112.6,751.6 1112.9,752.7 1113.1,751.1 1113.4,752.4 1113.6,758.2 1113.9,758.3 1114.1,751.7 1114.4,752.0 1114.6,753.4 1114.8,758.0 1115.1,755.9 1115.3,756.3 1115.6,751.1 1115.8,756.3 1116.1,758.3 1116.3,756.3 1116.6,752.5 1116.8,748.0 1117.1,755.3 1117.3,749.7 1117.5,755.2 1117.8,740.3 1118.0,756.7 1118.3,750.9 1118.5,755.4 1118.8,750.4 1119.0,755.2 1119.3,747.6 1119.5,753.0 1119.8,753.6 1120.0,758.0 1120.2,749.3 1120.5,752.8 1120.7,753.6 1121.0,753.8 1121.2,755.6 1121.5,755.7 1121.7,752.7 1122.0,756.8 1122.2,754.5 1122.5,746.0 1122.7,754.5 1122.9,755.0 1123.2,750.9 1123.4,757.5 1123.7,749.2 1123.9,754.1 1124.2,758.2 1124.4,754.7 1124.7,756.6 1124.9,751.8 1125.2,755.9 1125.4,779.6 1125.6,761.1 1125.9,755.9 1126.1,752.3 1126.4,752.6 1126.6,754.2 1126.9,751.8 1127.1,751.7 1127.4,754.5 1127.6,753.8 1127.9,751.4 1128.1,754.0 1128.3,763.6 1128.6,760.2 1128.8,756.9 1129.1,752.2 1129.3,736.9 1129.6,752.4 1129.8,751.2 1130.1,752.8 1130.3,758.1 1130.6,754.4 1130.8,759.6 1131.0,759.4 1131.3,756.5 1131.5,763.0 1131.8,749.1 1132.0,746.7 1132.3,755.7 1132.5,756.5 1132.8,762.6 1133.0,753.4 1133.3,757.8 1133.5,759.6 1133.8,760.3 1134.0,755.8 1134.2,756.2 1134.5,755.9 1134.7,757.6 1135.0,761.6 1135.2,750.5 1135.5,752.7 1135.7,757.6 1136.0,760.4 1136.2,759.2 1136.5,753.2 1136.7,753.8 1136.9,754.6 1137.2,751.4 1137.4,757.6 1137.7,750.6 1137.9,755.1 1138.2,758.3 1138.4,753.9 1138.7,754.6 1138.9,758.2 1139.2,749.4 1139.4,761.5 1139.6,754.8 1139.9,754.3 1140.1,758.3 1140.4,755.6 1140.6,751.2 1140.9,759.8 1141.1,759.6 1141.4,757.0 1141.6,754.0 1141.9,751.9 1142.1,753.8 1142.3,759.8 1142.6,751.9 1142.8,752.7 1143.1,752.3 1143.3,761.8 1143.6,761.9 1143.8,758.4 1144.1,757.6 1144.3,756.1 1144.6,760.0 1144.8,759.9 1145.0,754.7 1145.3,763.7 1145.5,760.4 1145.8,756.1 1146.0,753.6 1146.3,755.3 1146.5,750.6 1146.8,755.2 1147.0,753.8 1147.3,753.4 1147.5,756.2 1147.7,761.0 1148.0,757.4 1148.2,757.1 1148.5,759.5 1148.7,754.1 1149.0,758.4 1149.2,761.8 1149.5,756.6 1149.7,760.1 1150.0,754.7 1150.2,765.9 1150.4,762.6 1150.7,756.6 1150.9,755.8 1151.2,756.4 1151.4,751.3 1151.7,757.6 1151.9,758.5 1152.2,753.8 1152.4,738.3 1152.7,755.4 1152.9,752.3 1153.1,757.3 1153.4,757.2 1153.6,758.9 1153.9,755.4 1154.1,754.6 1154.4,753.1 1154.6,754.4 1154.9,749.7 1155.1,756.2 1155.4,756.3 1155.6,757.8 1155.8,752.3 1156.1,756.5 1156.3,757.8 1156.6,761.4 1156.8,753.5 1157.1,753.8 1157.3,765.9 1157.6,760.7 1157.8,760.0 1158.1,759.7 1158.3,756.7 1158.5,758.2 1158.8,756.4 1159.0,755.8 1159.3,752.1 1159.5,757.8 1159.8,755.7 1160.0,757.7 1160.3,756.3 1160.5,758.1 1160.8,761.0 1161.0,755.6 1161.2,753.1 1161.5,760.3 1161.7,757.1 1162.0,757.1 1162.2,764.5 1162.5,750.2 1162.7,751.9 1163.0,752.9 1163.2,753.6 1163.5,760.1 1163.7,765.7 1163.9,757.4 1164.2,756.9 1164.4,758.1 1164.7,758.7 1164.9,753.7 1165.2,754.5 1165.4,757.3 1165.7,759.0 1165.9,749.3 1166.2,754.4 1166.4,757.0 1166.6,761.9 1166.9,762.8 1167.1,767.1 1167.4,758.3 1167.6,749.2 1167.9,758.0 1168.1,757.4 1168.4,756.6 1168.6,754.5 1168.9,763.7 1169.1,761.9 1169.3,754.4 1169.6,756.6 1169.8,755.8 1170.1,761.1 1170.3,752.3 1170.6,757.2 1170.8,758.4 1171.1,760.7 1171.3,760.4 1171.6,754.6 1171.8,758.1 1172.0,752.2 1172.3,753.5 1172.5,757.7 1172.8,759.7 1173.0,608.9 1173.3,665.8 1173.5,767.5 1173.8,756.6 1174.0,758.5 1174.3,750.2 1174.5,756.2 1174.7,758.3 1175.0,757.6 1175.2,760.0 1175.5,760.2 1175.7,758.0 1176.0,764.9 1176.2,757.8 1176.5,763.7 1176.7,760.4 1177.0,760.4 1177.2,755.4 1177.4,752.4 1177.7,752.9 1177.9,757.7 1178.2,758.7 1178.4,757.8 1178.7,757.4 1178.9,754.0 1179.2,750.6 1179.4,758.0 1179.7,751.2 1179.9,754.8 1180.1,751.5 1180.4,758.2 1180.6,756.0 1180.9,756.9 1181.1,757.4 1181.4,761.8 1181.6,757.2 1181.9,763.3 1182.1,756.8 1182.4,752.1 1182.6,754.1" fill="none" stroke="#0000ff" stroke-width="1.6" stroke-linejoin="round" clip-path="url(#c4)"/>
<rect x="911.2" y="688.6" width="273.79999999999995" height="119.79999999999995" fill="none" stroke="#000" stroke-width="1.8"/>
<line x1="912.80" y1="808.40" x2="912.80" y2="815.30" stroke="#000" stroke-width="1.6"/>
<text x="912.80" y="831.30" font-size="10.0" text-anchor="middle">0</text>
<line x1="961.90" y1="808.40" x2="961.90" y2="815.30" stroke="#000" stroke-width="1.6"/>
<text x="961.90" y="831.30" font-size="10.0" text-anchor="middle">200</text>
<line x1="1011.00" y1="808.40" x2="1011.00" y2="815.30" stroke="#000" stroke-width="1.6"/>
<text x="1011.00" y="831.30" font-size="10.0" text-anchor="middle">400</text>
<line x1="1060.10" y1="808.40" x2="1060.10" y2="815.30" stroke="#000" stroke-width="1.6"/>
<text x="1060.10" y="831.30" font-size="10.0" text-anchor="middle">600</text>
<line x1="1109.20" y1="808.40" x2="1109.20" y2="815.30" stroke="#000" stroke-width="1.6"/>
<text x="1109.20" y="831.30" font-size="10.0" text-anchor="middle">800</text>
<line x1="1158.30" y1="808.40" x2="1158.30" y2="815.30" stroke="#000" stroke-width="1.6"/>
<text x="1158.30" y="831.30" font-size="10.0" text-anchor="middle">1000</text>
<line x1="911.20" y1="808.05" x2="904.30" y2="808.05" stroke="#000" stroke-width="1.6"/>
<text x="896.00" y="811.65" font-size="10.0" text-anchor="end">−100</text>
<line x1="911.20" y1="779.60" x2="904.30" y2="779.60" stroke="#000" stroke-width="1.6"/>
<text x="896.00" y="783.20" font-size="10.0" text-anchor="end">0</text>
<line x1="911.20" y1="751.15" x2="904.30" y2="751.15" stroke="#000" stroke-width="1.6"/>
<text x="896.00" y="754.75" font-size="10.0" text-anchor="end">100</text>
<line x1="911.20" y1="722.70" x2="904.30" y2="722.70" stroke="#000" stroke-width="1.6"/>
<text x="896.00" y="726.30" font-size="10.0" text-anchor="end">200</text>
<line x1="911.20" y1="694.25" x2="904.30" y2="694.25" stroke="#000" stroke-width="1.6"/>
<text x="896.00" y="697.85" font-size="10.0" text-anchor="end">300</text>
<text x="1048.10" y="849.50" font-size="10.42" text-anchor="middle">Y</text>
<text transform="translate(857.20,750.00) rotate(-90)" font-size="10.42" text-anchor="middle">counts</text>
<text transform="translate(1194.30,749.20) rotate(90)" font-size="10.42" text-anchor="middle">cut in y</text>
<rect x="1108.8" y="691.9" width="73.1" height="16" rx="2" ry="2" fill="#fff" fill-opacity="0.8" stroke="#ccc" stroke-width="1"/>
<line x1="1111.30" y1="699.80" x2="1133.50" y2="699.80" stroke="#0000ff" stroke-width="1.6"/>
<text x="1137.30" y="703.30" font-size="10.0" text-anchor="start">x=1024</text>
</svg></body></html>
